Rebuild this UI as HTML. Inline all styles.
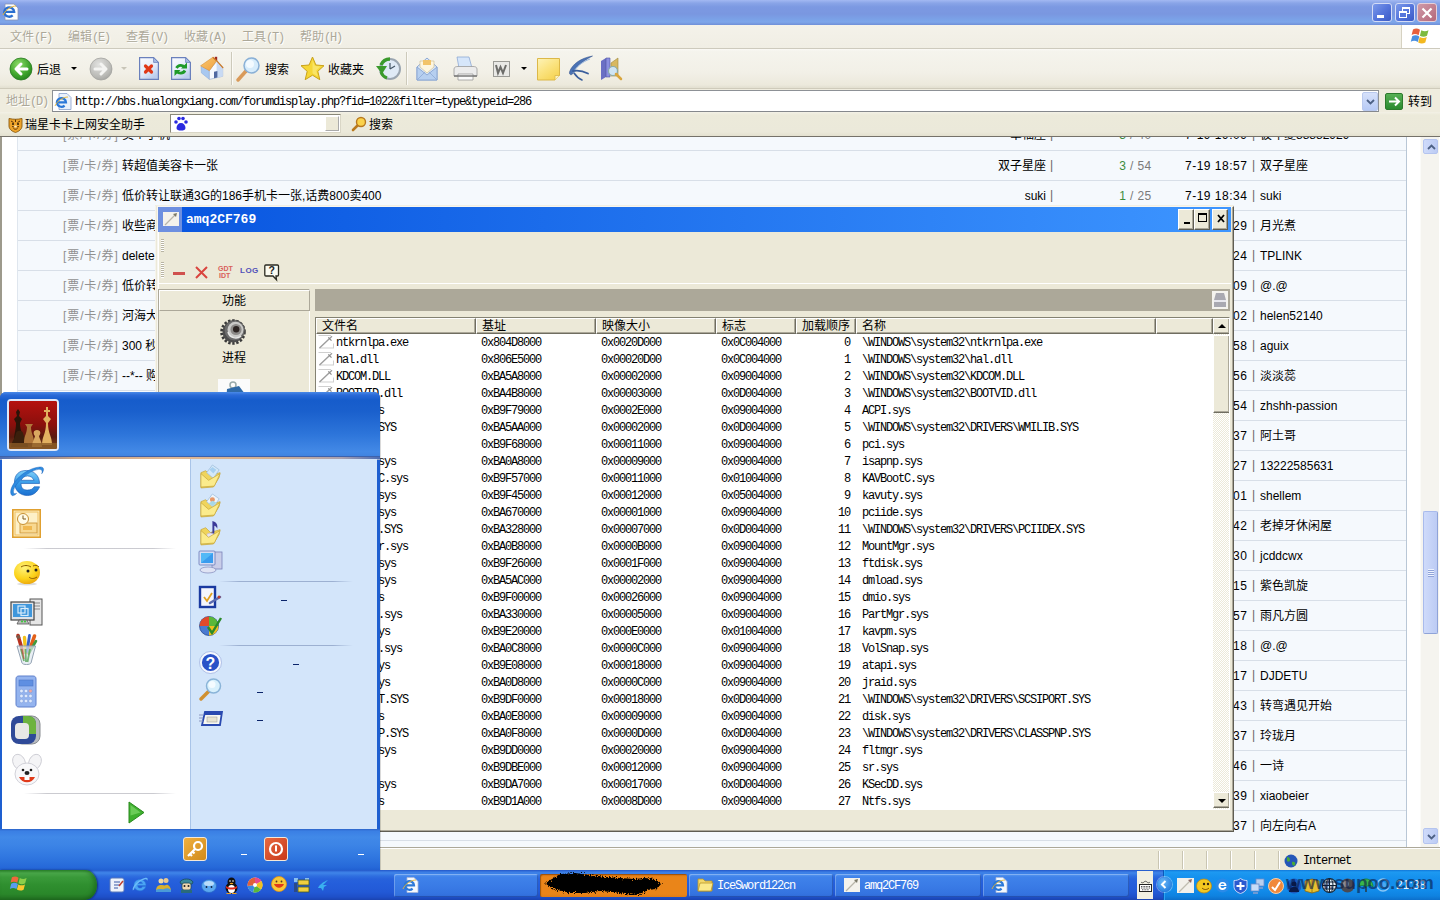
<!DOCTYPE html>
<html lang="zh"><head><meta charset="utf-8"><title>screenshot</title>
<style>
*{box-sizing:border-box;margin:0;padding:0}
html,body{width:1440px;height:900px;overflow:hidden;background:#ECE9D8}
body{position:relative;font-family:"Liberation Sans","Noto Sans CJK SC",sans-serif;font-size:12px;color:#000}
body *{position:absolute}
svg{display:block;overflow:visible}
.sim{font-family:"Liberation Mono","Noto Sans CJK SC",monospace;font-size:12px;letter-spacing:-1.2px;white-space:pre}
.ui{font-family:"Liberation Sans","Noto Sans CJK SC",sans-serif;font-size:12px;white-space:pre;line-height:14px}
/* IE chrome */
#ietitle{left:0;top:0;width:1440px;height:25px;background:linear-gradient(#a3b9f2 0,#8aa5e8 3px,#7c99e2 7px,#7a97e0 14px,#7ba3e8 20px,#7ea6ea 22px,#6f8fd8 25px)}
.capbtn{top:3px;width:20px;height:19px;border:1px solid #d4dcf6;border-radius:3px;background:linear-gradient(135deg,#7c9aea 0,#5676dc 50%,#3a5ac6 100%)}
#iemenu{left:0;top:25px;width:1440px;height:24px;background:linear-gradient(#f4f2ea,#f0eee4);border-bottom:1px solid #cdcabd}
#iemenu span{top:5px;color:#aca899;font-size:12px;line-height:14px;white-space:pre;text-shadow:1px 1px 0 #fff}
#ietool{left:0;top:49px;width:1440px;height:39px;background:linear-gradient(#fbfaf6 0,#f5f4ed 2px,#f2f0e7 60%,#ece9dc 92%,#e2dfd0);}
#ietool .lbl{top:14px;font-size:12px;line-height:14px;white-space:pre}
.tsep{top:3px;width:2px;height:33px;border-left:1px solid #cdcabb;border-right:1px solid #fbfaf6}
#ieaddr{left:0;top:88px;width:1440px;height:24px;background:#efecde;border-top:1px solid #cfcbbb;}
#ierising{left:0;top:112px;width:1440px;height:26px;background:linear-gradient(#f3f1e6 0,#eceada 3px,#ebe9da 20px,#e4e1d0 24px);border-bottom:2px solid #75726a}
/* forum */
#forum{left:0;top:137px;width:1440px;height:711px;background:#fff;overflow:hidden;border-left:2px solid #9d9a8c}
#ftable{left:15px;top:0;width:1390px;height:713px;background:linear-gradient(#d8dfe8 0,#d8dfe8 1px,transparent 1px) 0 13px/100% 30px #f5f9fd;border-left:1px solid #dfe6ee;border-right:1px solid #b9c7d6}
.frow{left:-2px;width:1440px;height:30px;font-size:12px;line-height:14px;white-space:pre}
.frow b{display:none}
.frow span{top:9px}
.frow .cat{color:#909090;letter-spacing:.9px}
.frow .bar{color:#666;top:8px}
.frow .lat{letter-spacing:.5px}
.frow .rp{color:#3c8c3c}
.frow .vw{color:#7a7a7a;letter-spacing:.4px}
#fsb{left:1418px;top:0;width:19px;height:713px;background:#f5f4ef;border-left:1px solid #fbfbf8}
#fsb .up,#fsb .dn,#fsb .thumb{left:2px;width:15px;background:linear-gradient(90deg,#cfdbfa,#bccbf4);border:1px solid #b4c4ef;border-radius:2px}
#fsb .up{top:2px;height:15px}
#fsb .dn{top:691px;height:16px}
#fsb .thumb{top:374px;height:123px;border-color:#a9bbec #8fa3d8 #8fa3d8 #a9bbec}
#fsb .thumb i{left:4px;width:6px;height:1px;background:#eef3ff;box-shadow:0 1px 0 #8fa3d8}
#iestatus{left:0;top:848px;width:1440px;height:22px;background:#ece9d8;border-top:1px solid #fff;box-shadow:0 -1px 0 #aca899}
#iestatus .cell{top:2px;width:24px;height:18px;border-left:1px solid #c9c5b2;box-shadow:inset 1px 0 0 #fff}
/* icesword: origin 157,206 ; size 1077x626 */
#ice{left:157px;top:206px;width:1077px;height:626px;background:#ece9d8;border:1px solid #f7f6f0;border-right-color:#5f5d52;border-bottom-color:#5f5d52;box-shadow:inset -1px -1px 0 #aca899,inset 1px 1px 0 #fff}
#ice>*{margin:-1px 0 0 -1px}
#icetitle{left:1px;top:1px;width:1073px;height:25px;background:linear-gradient(90deg,#0855e0 0,#0c5ae2 8%,#3d95ff 100%)}
#icetitle .ico{left:0;top:0;width:24px;height:25px;background:#6d8fe0}
#icetitle .t{left:28px;top:5px;color:#fff;font:bold 13px/16px "Liberation Mono",monospace;white-space:pre}
#icetitle .cb{top:2px;width:16px;height:21px;background:#ece9d8;border:1px solid #fff;border-right-color:#5f5d52;border-bottom-color:#5f5d52;box-shadow:inset -1px -1px 0 #aca899}
.grip{width:3px;background:repeating-linear-gradient(#b8b4a2 0,#b8b4a2 1px,#fff 1px,#fff 2px)}
.tiny{font:bold 7px/7px "Liberation Sans",sans-serif;white-space:pre}
#icel{left:1px;top:83px;width:152px;height:540px;border:1px solid #fff;border-top-color:#aca899;border-left-color:#aca899}
#icel .hd{left:0;top:0;width:151px;height:21px;border:1px solid #fff;border-right-color:#aca899;border-bottom-color:#aca899;background:#ece9d8}
#icel .hd span,#icel .lb{font-size:12px;line-height:14px;white-space:pre}
#icel .hd span{left:62px;top:3px}
#icebar{left:158px;top:83px;width:915px;height:22px;background:#aca899}
#icelist{left:158px;top:111px;width:915px;height:493px;background:#fff;border:1px solid #848272;border-right-color:#fff;border-bottom-color:#fff;overflow:hidden}
#icelist .lh{left:0;top:0;width:897px;height:16px;background:#ece9d8}
#icelist .hc{top:0;height:16px;border:1px solid #fff;border-right-color:#6f6d60;border-bottom-color:#6f6d60;box-shadow:inset -1px -1px 0 #aca899}
#icelist .hc span{left:5px;top:0px;font-size:12px;line-height:14px;white-space:pre}
#icelist .lr{left:0;width:897px;height:17px}
#icelist .lr span{top:2px;font-family:"Liberation Mono","Noto Sans CJK SC",monospace;font-size:12px;letter-spacing:-1.2px;line-height:14px;white-space:pre}
#icelist .lr .fi{left:2px;top:-1px}
#icelist .sb{left:897px;top:0;width:17px;height:491px;background:repeating-conic-gradient(#fff 0 25%,#ece9d8 0 50%) 0 0/2px 2px}
#icelist .sb .b{left:0;width:17px;height:16px;background:#ece9d8;border:1px solid #fff;border-right-color:#6f6d60;border-bottom-color:#6f6d60;box-shadow:inset -1px -1px 0 #aca899}
#icelist .sb .b i{left:4px;width:0;height:0;border:4px solid transparent}
/* start menu: origin 0,392 size 380x478 */
#sm{left:0;top:392px;width:380px;height:478px;background:#1e5fd0;border-radius:6px 6px 0 0;overflow:hidden;box-shadow:1px 0 0 rgba(0,0,0,.15)}
#smhead{left:0;top:0;width:380px;height:65px;background:linear-gradient(#4a8ae8 0,#2a6ad8 3px,#165ccb 8px,#1a60cd 30%,#2d75da 65%,#4389e6 92%,#3f82df 100%)}
#smpic{left:7px;top:7px;width:52px;height:52px;border:2px solid #dfe8f8;border-radius:4px;overflow:hidden;background:#800}
#smorange{left:0;top:64px;width:380px;height:3px;background:linear-gradient(#3d62ac 0,#3d62ac 1px,transparent 1px),linear-gradient(90deg,#4a6cb4 0,#c8a284 20%,#e0b894 45%,#d4b090 70%,#a8a0b0 90%,#4a6cb4 100%);box-shadow:0 1px 0 rgba(250,225,195,.55)}
#sml{left:2px;top:67px;width:188px;height:370px;background:#fff}
#smr{left:190px;top:67px;width:187px;height:370px;background:#d3e5fa;border-left:1px solid #a9c4e8}
#sm .sep{height:1px;background:linear-gradient(90deg,rgba(200,200,205,0),rgba(200,200,206,.95) 15%,rgba(200,200,206,.95) 85%,rgba(200,200,205,0))}
#smr .sep{background:linear-gradient(90deg,rgba(140,160,200,0),rgba(150,170,205,.9) 15%,rgba(150,170,205,.9) 85%,rgba(140,160,200,0))}
#sm .us{width:6px;height:1px;background:#0a246a}
#sm .us.w{background:#fff}
#smfoot{left:0;top:437px;width:380px;height:41px;background:linear-gradient(#2b63c8 0,#3a7fe4 2px,#4189e8 8px,#3c84e6 16px,#3077e0 28px,#2669d9 38px,#2160d2 41px)}
#smfoot .fb{top:8px;width:24px;height:24px;border:1px solid #f4e8d8;border-radius:3px}
/* taskbar */
#tb{left:0;top:870px;width:1440px;height:30px;background:linear-gradient(#2356c8 0,#3a7be4 2px,#3f84e8 3px,#2f6fe0 6px,#2762dc 9px,#245edb 14px,#2259d6 22px,#1e4fc8 27px,#1a43b0 30px)}
#startbtn{left:0;top:0;width:97px;height:30px;border-radius:0 12px 12px 0/0 15px 15px 0;background:linear-gradient(#2f8a2f 0,#4aa84a 3px,#3a9a3a 7px,#2f8f2f 15px,#2a872a 24px,#226f22 30px);box-shadow:1px 0 2px rgba(0,0,30,.5),inset -3px 0 4px rgba(0,60,0,.35)}
#tb .ql{top:7px}
.tk{top:4px;height:23px;border-radius:2px;background:linear-gradient(#5b9af0 0,#3f82ea 3px,#3a7be6 12px,#3473e0 20px,#2f6ad8 23px);box-shadow:inset 1px 1px 0 rgba(255,255,255,.25),inset -1px -1px 0 rgba(0,0,60,.25)}
.tk.on{background:linear-gradient(#d97512 0,#ea8519 3px,#ea8519 20px,#e07d16 23px);box-shadow:inset 1px 1px 1px rgba(90,40,0,.5)}
.tk span{top:5px;color:#fff;font-family:"Liberation Mono",monospace;font-size:12px;letter-spacing:-1.2px;line-height:14px;white-space:pre}
#kbd{left:1137px;top:1px;width:16px;height:28px;background:#f1efe2}
#tray{left:1163px;top:0;width:277px;height:30px;background:linear-gradient(#1277d8 0,#1d9af2 2px,#1a96f0 4px,#1590ee 8px,#128ceb 20px,#0f82e0 26px,#0c6fcb 30px);border-left:1px solid #0c58b8;box-shadow:inset 1px 0 0 #2aa4f6}
#tray .chev{left:-7px;top:7px;width:15px;height:15px;border-radius:8px;background:radial-gradient(circle at 40% 35%,#6ab8f8,#2a82e0 70%,#1a60c0);box-shadow:0 0 0 1px rgba(255,255,255,.35)}
#tray .ti{top:8px}
#tray .clock{left:232px;top:9px;color:#e8f2ff;font-size:12px;line-height:12px;white-space:pre}
#tray .wm{left:122px;top:2px;color:rgba(8,24,70,.6);font:bold 19px/22px "Liberation Sans",sans-serif;letter-spacing:-.2px;white-space:pre}
#ice::before{content:"";position:absolute;left:-3px;top:-2px;width:2px;height:627px;background:#ece9d8;box-shadow:inset 1px 0 0 #f6f4ec}
#ice::after{content:"";position:absolute;left:-3px;top:-2px;width:1079px;height:1px;background:#f1efe4}
#iemenu span i,#ieaddr span i{position:static;font-style:normal;font-family:"Liberation Mono",monospace;font-size:12px;letter-spacing:-1.2px}

</style></head>
<body>
<div id="ietitle" class="abs">
 <svg style="left:2px;top:3px" width="18" height="18" viewBox="0 0 18 18"><path d="M3 1h9l4 4v12H3z" fill="#fdfdfd" stroke="#8a96b8" stroke-width=".8"/><path d="M2.800 8.800h9.400a5 4.700 0 1 0-1.500 3.600" fill="none" stroke="#2b6fd0" stroke-width="2.300"/><path d="M1 12c3-6 9-9 13-9" stroke="#e8b530" stroke-width="1" fill="none"/></svg>
 <div class="capbtn" style="left:1372px"><div style="left:4px;top:11px;width:7px;height:3px;background:#fff"></div></div>
 <div class="capbtn" style="left:1395px"><div style="left:6px;top:3px;width:8px;height:7px;border:1px solid #fff;border-top-width:2px"></div><div style="left:3px;top:7px;width:8px;height:7px;border:1px solid #fff;border-top-width:2px;background:#5676dc"></div></div>
 <div class="capbtn" style="left:1417px;background:linear-gradient(135deg,#cf9aa8,#b5687a);border-color:#e6cfd8"><svg style="left:3px;top:3px" width="12" height="12" viewBox="0 0 12 12"><path d="M1.5 1.5l9 9M10.5 1.5l-9 9" stroke="#fff" stroke-width="2.2"/></svg></div>
</div>
<div id="iemenu" class="abs">
<span style="left:10px">文件<i>(F)</i></span><span style="left:68px">编辑<i>(E)</i></span><span style="left:126px">查看<i>(V)</i></span><span style="left:184px">收藏<i>(A)</i></span><span style="left:242px">工具<i>(T)</i></span><span style="left:300px">帮助<i>(H)</i></span>
<div style="left:1401px;top:0;width:39px;height:23px;background:#fff;border-left:1px solid #d6d2c2"></div>
<svg style="left:1411px;top:2px" width="20" height="18" viewBox="0 0 20 18"><path d="M2 2.5c2.5-1.3 4.5-1.2 7 .3L7.6 8.2c-2.400-1.400-4.500-1.500-7-.2z" fill="#e8603c"/><path d="M10.300 3.300c2.500 1.300 4.600 1.300 7.200 0l-1.500 5.500c-2.500 1.300-4.600 1.300-7.100-.1z" fill="#7cba3d"/><path d="M.3 9.200c2.500-1.300 4.600-1.200 7.100.2l-1.500 5.500c-2.400-1.400-4.500-1.500-7-.2z" fill="#4a8fe0" transform="translate(.9 0)"/><path d="M8.700 10c2.500 1.300 4.600 1.300 7.100 0l-1.500 5.500c-2.500 1.300-4.600 1.300-7.100-.1z" fill="#f3b81f"/></svg>
</div>
<div id="ietool" class="abs">
 <!-- back -->
 <svg style="left:9px;top:8px" width="24" height="24" viewBox="0 0 24 24"><defs><radialGradient id="gb" cx=".4" cy=".3" r=".8"><stop offset="0" stop-color="#8fdc6a"/><stop offset=".6" stop-color="#3fa52c"/><stop offset="1" stop-color="#1f7a1a"/></radialGradient><radialGradient id="gg" cx=".4" cy=".3" r=".8"><stop offset="0" stop-color="#e2e2e0"/><stop offset=".7" stop-color="#b9b9b5"/><stop offset="1" stop-color="#9e9e9a"/></radialGradient></defs><circle cx="12" cy="12" r="11" fill="url(#gb)" stroke="#2a7a22" stroke-width=".8"/><path d="M18 12H8M12 7l-5 5 5 5" stroke="#fff" stroke-width="3" fill="none" stroke-linejoin="round" stroke-linecap="round"/></svg>
 <span class="lbl" style="left:37px">后退</span>
 <div style="left:71px;top:18px;border:3px solid transparent;border-top:3px solid #000;border-bottom:0"></div>
 <svg style="left:89px;top:8px" width="24" height="24" viewBox="0 0 24 24"><circle cx="12" cy="12" r="11" fill="url(#gg)" stroke="#a3a39f" stroke-width=".8"/><path d="M6 12h10M12 7l5 5-5 5" stroke="#f4f4f2" stroke-width="3" fill="none" stroke-linejoin="round" stroke-linecap="round"/></svg>
 <div style="left:121px;top:18px;border:3px solid transparent;border-top:3px solid #c8c5b8;border-bottom:0"></div>
 <!-- stop -->
 <svg style="left:139px;top:8px" width="20" height="23" viewBox="0 0 20 23"><defs><linearGradient id="pg" x1="0" y1="0" x2=".6" y2="1"><stop offset="0" stop-color="#fbfcff"/><stop offset=".6" stop-color="#e4ecfa"/><stop offset="1" stop-color="#bccdee"/></linearGradient></defs><path d="M.6.600h14l4.800 4.800v17H.6z" fill="url(#pg)" stroke="#6a80bc" stroke-width="1.200"/><path d="M14.600.6v4.800h4.800z" fill="#a8bce4" stroke="#6a80bc" stroke-width=".8"/><path d="M6.500 9l6 6M12.500 9l-6 6" stroke="#e03818" stroke-width="3.200" stroke-linecap="round"/></svg>
 <!-- refresh -->
 <svg style="left:171px;top:8px" width="20" height="23" viewBox="0 0 20 23"><path d="M.6.600h14l4.800 4.800v17H.6z" fill="url(#pg)" stroke="#6a80bc" stroke-width="1.200"/><path d="M14.600.6v4.800h4.800z" fill="#a8bce4" stroke="#6a80bc" stroke-width=".8"/><path d="M14 10.500a5 5 0 0 0-8.500.500" stroke="#1f9a2a" stroke-width="2.800" fill="none"/><path d="M16 5.500v6h-6z" fill="#1f9a2a"/><path d="M5.500 14a5 5 0 0 0 8.500-.500" stroke="#1f9a2a" stroke-width="2.800" fill="none"/><path d="M3.500 19v-6h6z" fill="#1f9a2a"/></svg>
 <!-- home -->
 <svg style="left:201px;top:7px" width="23" height="25" viewBox="0 0 23 25"><defs><linearGradient id="rf" x1="0" y1="0" x2="1" y2="1"><stop offset="0" stop-color="#f8c870"/><stop offset="1" stop-color="#f0a040"/></linearGradient></defs><rect x="13.800" y=".8" width="2.400" height="4" fill="#a02820"/><path d="M0 10.400l8.400 3.800v9.200L.4 16.900z" fill="#a8c8f0" stroke="#88a8d8" stroke-width=".5"/><path d="M8.400 14.200l7.200-8.700 6.100 6.800v8L8.400 23.400z" fill="#f6f9fe" stroke="#90a8d0" stroke-width=".6"/><path d="M15.600 5.500l6.100 6.800v8l-6 1.400z" fill="#c8daf4"/><path d="M-.4 9.800L11.800 1.300l3.800 3.400-7.200 10z" fill="url(#rf)" stroke="#d89038" stroke-width=".6"/><path d="M11.800 1.300l3.800 3.400 6.600 7.300" fill="none" stroke="#c87828" stroke-width="1.200"/><path d="M13 15.800l3.400-.8v6.500l-3.400.8z" fill="#5068a0"/></svg>
 <div class="tsep" style="left:231px"></div>
 <!-- search -->
 <svg style="left:236px;top:8px" width="25" height="25" viewBox="0 0 25 25"><path d="M2 23l8-9" stroke="#d99a5a" stroke-width="3.500" stroke-linecap="round"/><circle cx="15.500" cy="8.500" r="7.500" fill="#d7ecfb" stroke="#8ab0d6" stroke-width="1.500"/><circle cx="14" cy="7" r="4" fill="#f3faff"/></svg>
 <span class="lbl" style="left:265px">搜索</span>
 <!-- star -->
 <svg style="left:300px;top:7px" width="25" height="25" viewBox="0 0 25 25"><path d="M12.500 1l3.400 8 8.100.7-6.200 5.600 2 8.400-7.300-4.500L5.200 23.700l2-8.400L1 9.700 9.100 9z" fill="#f6d736" stroke="#c9a21b" stroke-width="1"/><path d="M12.500 4l2.400 6 5.600.5-4.200 4 1.300 5.700-5.100-3z" fill="#fbea7c" opacity=".7"/></svg>
 <span class="lbl" style="left:328px">收藏夹</span>
 <!-- history -->
 <svg style="left:376px;top:8px" width="25" height="24" viewBox="0 0 25 24"><circle cx="14" cy="12" r="10" fill="#dfeaf6" stroke="#9aa5b0" stroke-width="2"/><path d="M14 12V6M14 12l5-3" stroke="#456" stroke-width="1.200"/><path d="M14 2a10 10 0 0 0-9 6" stroke="#3a9a2c" stroke-width="3.500" fill="none"/><path d="M0 9h11l-5 8z" fill="#3a9a2c"/><path d="M5 15a10 10 0 0 0 6 6" stroke="#3a9a2c" stroke-width="3" fill="none"/></svg>
 <div class="tsep" style="left:406px"></div>
 <!-- mail -->
 <svg style="left:416px;top:8px" width="22" height="24" viewBox="0 0 22 24"><path d="M1 10L11 1l10 9v13H1z" fill="#dbe8f8" stroke="#8ea9d4"/><path d="M4 10V4h14v6l-7 6z" fill="#fdf6e0" stroke="#c9b98a" stroke-width=".6"/><path d="M7 3h8v5H7z" fill="#f2c46a"/><path d="M1 10l10 8 10-8v13H1z" fill="#b6cff0" stroke="#8ea9d4"/><path d="M1 23l8-8M21 23l-8-8" stroke="#8ea9d4" stroke-width=".8"/></svg>
 <!-- printer -->
 <svg style="left:453px;top:7px" width="25" height="26" viewBox="0 0 25 26"><path d="M6 12L4 1h12l3 11z" fill="#d6e6fa" stroke="#8ea9d4" stroke-width=".8"/><path d="M1 13c0-2 2-2.500 4-2.500h15c2 0 4 .5 4 2.500v7H1z" fill="#ececec" stroke="#9a9a9a" stroke-width=".8"/><path d="M5 18h15v6H5z" fill="#fafafa" stroke="#9a9a9a" stroke-width=".8"/><path d="M1 20h23" stroke="#777" stroke-width="1.500"/></svg>
 <!-- word -->
 <svg style="left:493px;top:12px" width="17" height="16" viewBox="0 0 17 16"><rect x=".5" y=".5" width="16" height="15" fill="#e9e9e6" stroke="#9b9b96"/><path d="M3 4l2 8 2.500-6 2.500 6 3-8" stroke="#6d6d6a" stroke-width="2" fill="none"/></svg>
 <div style="left:521px;top:18px;border:3px solid transparent;border-top:3px solid #000;border-bottom:0"></div>
 <!-- note -->
 <svg style="left:537px;top:9px" width="23" height="23" viewBox="0 0 23 23"><defs><linearGradient id="nt" x1="0" y1="0" x2=".7" y2="1"><stop offset="0" stop-color="#fdf3b8"/><stop offset=".5" stop-color="#fbe482"/><stop offset="1" stop-color="#f6d455"/></linearGradient></defs><path d="M.5.500h22v17l-4.500 4.500H.5z" fill="url(#nt)" stroke="#dcb848"/><path d="M18 22v-4.500h4.500" fill="#fdf4c0" stroke="#dcb848" stroke-width=".8"/></svg>
 <!-- bird -->
 <svg style="left:567px;top:6px" width="26" height="26" viewBox="0 0 26 26"><path d="M25.500 1C14 3 5 9 2.500 17c-.5 2.500 1.500 3.500 3 2C7.500 13 14 7 25.500 1z" fill="#4a72b4" stroke="#2a4a86" stroke-width=".5"/><path d="M23 4C15 7 9 12 6 18" stroke="#9ab8e0" stroke-width="1" fill="none"/><path d="M6 16c5-1 10 0 15 2.500" stroke="#3a5e9c" stroke-width="1.800" fill="none" stroke-linecap="round"/><path d="M7 18c2 3 4.500 5.500 8 7" stroke="#3a5e9c" stroke-width="1.600" fill="none" stroke-linecap="round"/></svg>
 <!-- books -->
 <svg style="left:600px;top:8px" width="23" height="24" viewBox="0 0 23 24"><path d="M1 4l5-3v19l-5 3z" fill="#6a6fc4"/><path d="M6 1h4v19H6z" fill="#8a8fe0" stroke="#4d52a0" stroke-width=".6"/><path d="M11 6l7-5v18h-7z" fill="#d8b860" stroke="#a08a40" stroke-width=".6"/><circle cx="13" cy="14" r="4.500" fill="#cfe5f5" stroke="#8aa" stroke-width="1.200"/><path d="M16 17l5 5" stroke="#d9a63e" stroke-width="2.500" stroke-linecap="round"/></svg>
</div>
<div id="ieaddr" class="abs">
 <span style="left:6px;top:5px;color:#aca899;font-size:12px;line-height:14px;white-space:pre;text-shadow:1px 1px 0 #fff">地址<i>(D)</i></span>
 <div style="left:52px;top:1px;width:1327px;height:22px;background:#fff;border:1px solid #8d9196;border-bottom-color:#85888c"></div>
 <svg style="left:55px;top:4px" width="17" height="17" viewBox="0 0 17 17"><path d="M4 .5h8l4 4v12H4z" fill="#eaf1fb" stroke="#88a0cc" stroke-width=".8"/><path d="M2.300 9.300h8.700a4.600 4.300 0 1 0-1.400 3.300" fill="none" stroke="#2b78d8" stroke-width="2.200"/><path d="M0 13c2-5 8-9 13-9" stroke="#e8b530" stroke-width=".9" fill="none"/></svg>
 <span class="sim" style="left:75px;top:6px;line-height:14px">http://bbs.hualongxiang.com/forumdisplay.php?fid=1022&amp;filter=type&amp;typeid=286</span>
 <div style="left:1362px;top:3px;width:16px;height:19px;background:linear-gradient(#d6e1fb,#b7caf5);border:1px solid #b9c9ee;border-radius:2px"><svg style="left:3px;top:6px" width="9" height="6" viewBox="0 0 9 6"><path d="M1 1l3.500 3.500L8 1" stroke="#4d6185" stroke-width="1.800" fill="none"/></svg></div>
 <div style="left:1385px;top:4px;width:18px;height:17px;background:linear-gradient(#58b055,#2a8a2f);border:1px solid #2c7a2c;border-radius:2px"><svg style="left:2px;top:2px" width="13" height="11" viewBox="0 0 13 11"><path d="M1 5.500h10M7 1.500l4 4-4 4" stroke="#fff" stroke-width="2" fill="none"/></svg></div>
 <span class="ui" style="left:1408px;top:6px">转到</span>
</div>
<div id="ierising" class="abs">
 <svg style="left:8px;top:5px" width="15" height="16" viewBox="0 0 15 16"><path d="M1 1.500c4.300 1 8.700 1 13 0v7.500c0 3.200-3.200 5.500-6.500 6.500C4.200 14.500 1 12.200 1 9z" fill="#eda32a" stroke="#8a5a10" stroke-width=".9"/><path d="M3 4l2.500 1.500M12 4L9.500 5.500M7.500 2.500v2.500M4 9.500l2 .5M11 9.500l-2 .5" stroke="#5a3208" stroke-width="1"/><circle cx="5" cy="7" r="1" fill="#2a1a08"/><circle cx="10" cy="7" r="1" fill="#2a1a08"/><path d="M5.500 11.500c1.300 1 2.700 1 4 0" stroke="#5a3208" stroke-width="1" fill="none"/><ellipse cx="7.500" cy="9.500" rx="1.300" ry=".9" fill="#fbe9c0"/></svg>
 <span class="ui" style="left:25px;top:6px">瑞星卡卡上网安全助手</span>
 <div style="left:170px;top:2px;width:171px;height:19px;background:#fff;border:1px solid #8a8878;border-right-color:#d9d6c6;border-bottom-color:#d9d6c6"></div>
 <svg style="left:173px;top:4px" width="15" height="15" viewBox="0 0 15 15"><circle cx="3" cy="6" r="1.800" fill="#2a2ae0"/><circle cx="6" cy="2.500" r="1.800" fill="#2a2ae0"/><circle cx="10" cy="2.500" r="1.800" fill="#2a2ae0"/><circle cx="13" cy="6" r="1.800" fill="#2a2ae0"/><path d="M3.500 12c0-3 2-5 4.500-5s4.500 2 4.500 5c0 2-2 2.500-4.500 2.500S3.500 14 3.500 12z" fill="#2a2ae0"/></svg>
 <div style="left:325px;top:4px;width:14px;height:15px;background:#ece9d8;border:1px solid #fff;border-right-color:#aaa;border-bottom-color:#aaa"></div>
 <svg style="left:351px;top:4px" width="16" height="16" viewBox="0 0 16 16"><path d="M2 14l5-5" stroke="#b8791f" stroke-width="2.600" stroke-linecap="round"/><circle cx="10" cy="6" r="4.500" fill="#fbd24a" stroke="#b8791f" stroke-width="1.400"/></svg>
 <span class="ui" style="left:369px;top:6px">搜索</span>
</div>
<div id="forum" class="abs">
<div id="ftable"></div>
<div class="frow" style="top:-18px"><b></b><span class="cat" style="left:63px">[票/卡/券]</span><span style="left:122px">卖个手机</span><span class="au" style="right:394px">幸福座</span><span class="bar" style="left:1050px">|</span><span class="rp" style="right:314px">3</span><span class="vw" style="left:1130px">/ 40</span><span class="lat" style="left:1185px">7-19 19:09</span><span class="bar" style="left:1252px">|</span><span style="left:1260px">彼年夏88882929</span></div>
<div class="frow" style="top:13px"><b></b><span class="cat" style="left:63px">[票/卡/券]</span><span style="left:122px">转超值美容卡一张</span><span class="au" style="right:394px">双子星座</span><span class="bar" style="left:1050px">|</span><span class="rp" style="right:314px">3</span><span class="vw" style="left:1130px">/ 54</span><span class="lat" style="left:1185px">7-19 18:57</span><span class="bar" style="left:1252px">|</span><span style="left:1260px">双子星座</span></div>
<div class="frow" style="top:43px"><b></b><span class="cat" style="left:63px">[票/卡/券]</span><span style="left:122px">低价转让联通3G的186手机卡一张,话费800卖400</span><span class="au" style="right:394px">suki</span><span class="bar" style="left:1050px">|</span><span class="rp" style="right:314px">1</span><span class="vw" style="left:1130px">/ 25</span><span class="lat" style="left:1185px">7-19 18:34</span><span class="bar" style="left:1252px">|</span><span style="left:1260px">suki</span></div>
<div class="frow" style="top:73px"><b></b><span class="cat" style="left:63px">[票/卡/券]</span><span style="left:122px">收些商场购物卡</span><span class="au" style="right:394px">月光煮</span><span class="bar" style="left:1050px">|</span><span class="rp" style="right:314px">2</span><span class="vw" style="left:1130px">/ 61</span><span class="lat" style="left:1185px">7-19 17:29</span><span class="bar" style="left:1252px">|</span><span style="left:1260px">月光煮</span></div>
<div class="frow" style="top:103px"><b></b><span class="cat" style="left:63px">[票/卡/券]</span><span style="left:122px">delete</span><span class="au" style="right:394px">TPLINK</span><span class="bar" style="left:1050px">|</span><span class="rp" style="right:314px">0</span><span class="vw" style="left:1130px">/ 33</span><span class="lat" style="left:1185px">7-19 17:24</span><span class="bar" style="left:1252px">|</span><span style="left:1260px">TPLINK</span></div>
<div class="frow" style="top:133px"><b></b><span class="cat" style="left:63px">[票/卡/券]</span><span style="left:122px">低价转让电影票</span><span class="au" style="right:394px">@.@</span><span class="bar" style="left:1050px">|</span><span class="rp" style="right:314px">4</span><span class="vw" style="left:1130px">/ 72</span><span class="lat" style="left:1185px">7-19 17:09</span><span class="bar" style="left:1252px">|</span><span style="left:1260px">@.@</span></div>
<div class="frow" style="top:163px"><b></b><span class="cat" style="left:63px">[票/卡/券]</span><span style="left:122px">河海大学游泳票</span><span class="au" style="right:394px">helen52140</span><span class="bar" style="left:1050px">|</span><span class="rp" style="right:314px">1</span><span class="vw" style="left:1130px">/ 48</span><span class="lat" style="left:1185px">7-19 17:02</span><span class="bar" style="left:1252px">|</span><span style="left:1260px">helen52140</span></div>
<div class="frow" style="top:193px"><b></b><span class="cat" style="left:63px">[票/卡/券]</span><span style="left:122px">300 秒游泳卡转让</span><span class="au" style="right:394px">aguix</span><span class="bar" style="left:1050px">|</span><span class="rp" style="right:314px">2</span><span class="vw" style="left:1130px">/ 39</span><span class="lat" style="left:1185px">7-19 16:58</span><span class="bar" style="left:1252px">|</span><span style="left:1260px">aguix</span></div>
<div class="frow" style="top:223px"><b></b><span class="cat" style="left:63px">[票/卡/券]</span><span style="left:122px">--*-- 购物卡回收</span><span class="au" style="right:394px">淡淡蕊</span><span class="bar" style="left:1050px">|</span><span class="rp" style="right:314px">0</span><span class="vw" style="left:1130px">/ 27</span><span class="lat" style="left:1185px">7-19 16:56</span><span class="bar" style="left:1252px">|</span><span style="left:1260px">淡淡蕊</span></div>
<div class="frow" style="top:253px"><b></b><span class="cat" style="left:63px">[票/卡/券]</span><span style="left:122px">转让健身卡</span><span class="au" style="right:394px">zhshh-passion</span><span class="bar" style="left:1050px">|</span><span class="rp" style="right:314px">5</span><span class="vw" style="left:1130px">/ 88</span><span class="lat" style="left:1185px">7-19 16:54</span><span class="bar" style="left:1252px">|</span><span style="left:1260px">zhshh-passion</span></div>
<div class="frow" style="top:283px"><b></b><span class="cat" style="left:63px">[票/卡/券]</span><span style="left:122px">收购物卡</span><span class="au" style="right:394px">阿土哥</span><span class="bar" style="left:1050px">|</span><span class="rp" style="right:314px">1</span><span class="vw" style="left:1130px">/ 30</span><span class="lat" style="left:1185px">7-19 16:37</span><span class="bar" style="left:1252px">|</span><span style="left:1260px">阿土哥</span></div>
<div class="frow" style="top:313px"><b></b><span class="cat" style="left:63px">[票/卡/券]</span><span style="left:122px">出售手机充值卡</span><span class="au" style="right:394px">13222585631</span><span class="bar" style="left:1050px">|</span><span class="rp" style="right:314px">0</span><span class="vw" style="left:1130px">/ 22</span><span class="lat" style="left:1185px">7-19 16:27</span><span class="bar" style="left:1252px">|</span><span style="left:1260px">13222585631</span></div>
<div class="frow" style="top:343px"><b></b><span class="cat" style="left:63px">[票/卡/券]</span><span style="left:122px">转电影票两张</span><span class="au" style="right:394px">shellem</span><span class="bar" style="left:1050px">|</span><span class="rp" style="right:314px">3</span><span class="vw" style="left:1130px">/ 65</span><span class="lat" style="left:1185px">7-19 16:01</span><span class="bar" style="left:1252px">|</span><span style="left:1260px">shellem</span></div>
<div class="frow" style="top:373px"><b></b><span class="cat" style="left:63px">[票/卡/券]</span><span style="left:122px">休闲卡转让</span><span class="au" style="right:394px">老掉牙休闲屋</span><span class="bar" style="left:1050px">|</span><span class="rp" style="right:314px">2</span><span class="vw" style="left:1130px">/ 41</span><span class="lat" style="left:1185px">7-19 15:42</span><span class="bar" style="left:1252px">|</span><span style="left:1260px">老掉牙休闲屋</span></div>
<div class="frow" style="top:403px"><b></b><span class="cat" style="left:63px">[票/卡/券]</span><span style="left:122px">求购游泳卡</span><span class="au" style="right:394px">jcddcwx</span><span class="bar" style="left:1050px">|</span><span class="rp" style="right:314px">1</span><span class="vw" style="left:1130px">/ 36</span><span class="lat" style="left:1185px">7-19 15:30</span><span class="bar" style="left:1252px">|</span><span style="left:1260px">jcddcwx</span></div>
<div class="frow" style="top:433px"><b></b><span class="cat" style="left:63px">[票/卡/券]</span><span style="left:122px">转让美发卡</span><span class="au" style="right:394px">紫色凯旋</span><span class="bar" style="left:1050px">|</span><span class="rp" style="right:314px">0</span><span class="vw" style="left:1130px">/ 19</span><span class="lat" style="left:1185px">7-19 15:15</span><span class="bar" style="left:1252px">|</span><span style="left:1260px">紫色凯旋</span></div>
<div class="frow" style="top:463px"><b></b><span class="cat" style="left:63px">[票/卡/券]</span><span style="left:122px">面包券转让</span><span class="au" style="right:394px">雨凡方圆</span><span class="bar" style="left:1050px">|</span><span class="rp" style="right:314px">2</span><span class="vw" style="left:1130px">/ 58</span><span class="lat" style="left:1185px">7-19 14:57</span><span class="bar" style="left:1252px">|</span><span style="left:1260px">雨凡方圆</span></div>
<div class="frow" style="top:493px"><b></b><span class="cat" style="left:63px">[票/卡/券]</span><span style="left:122px">电影票求购</span><span class="au" style="right:394px">@.@</span><span class="bar" style="left:1050px">|</span><span class="rp" style="right:314px">1</span><span class="vw" style="left:1130px">/ 44</span><span class="lat" style="left:1185px">7-19 14:18</span><span class="bar" style="left:1252px">|</span><span style="left:1260px">@.@</span></div>
<div class="frow" style="top:523px"><b></b><span class="cat" style="left:63px">[票/卡/券]</span><span style="left:122px">超市卡出售</span><span class="au" style="right:394px">DJDETU</span><span class="bar" style="left:1050px">|</span><span class="rp" style="right:314px">0</span><span class="vw" style="left:1130px">/ 31</span><span class="lat" style="left:1185px">7-19 14:17</span><span class="bar" style="left:1252px">|</span><span style="left:1260px">DJDETU</span></div>
<div class="frow" style="top:553px"><b></b><span class="cat" style="left:63px">[票/卡/券]</span><span style="left:122px">蛋糕券转让</span><span class="au" style="right:394px">转弯遇见开始</span><span class="bar" style="left:1050px">|</span><span class="rp" style="right:314px">6</span><span class="vw" style="left:1130px">/ 93</span><span class="lat" style="left:1185px">7-19 13:43</span><span class="bar" style="left:1252px">|</span><span style="left:1260px">转弯遇见开始</span></div>
<div class="frow" style="top:583px"><b></b><span class="cat" style="left:63px">[票/卡/券]</span><span style="left:122px">月饼票回收</span><span class="au" style="right:394px">玲珑月</span><span class="bar" style="left:1050px">|</span><span class="rp" style="right:314px">2</span><span class="vw" style="left:1130px">/ 47</span><span class="lat" style="left:1185px">7-19 13:37</span><span class="bar" style="left:1252px">|</span><span style="left:1260px">玲珑月</span></div>
<div class="frow" style="top:613px"><b></b><span class="cat" style="left:63px">[票/卡/券]</span><span style="left:122px">健身卡转让</span><span class="au" style="right:394px">一诗</span><span class="bar" style="left:1050px">|</span><span class="rp" style="right:314px">1</span><span class="vw" style="left:1130px">/ 29</span><span class="lat" style="left:1185px">7-19 12:46</span><span class="bar" style="left:1252px">|</span><span style="left:1260px">一诗</span></div>
<div class="frow" style="top:643px"><b></b><span class="cat" style="left:63px">[票/卡/券]</span><span style="left:122px">游泳票两张</span><span class="au" style="right:394px">xiaobeier</span><span class="bar" style="left:1050px">|</span><span class="rp" style="right:314px">3</span><span class="vw" style="left:1130px">/ 52</span><span class="lat" style="left:1185px">7-19 12:39</span><span class="bar" style="left:1252px">|</span><span style="left:1260px">xiaobeier</span></div>
<div class="frow" style="top:673px"><b></b><span class="cat" style="left:63px">[票/卡/券]</span><span style="left:122px">话费卡出售</span><span class="au" style="right:394px">向左向右A</span><span class="bar" style="left:1050px">|</span><span class="rp" style="right:314px">0</span><span class="vw" style="left:1130px">/ 26</span><span class="lat" style="left:1185px">7-19 12:37</span><span class="bar" style="left:1252px">|</span><span style="left:1260px">向左向右A</span></div>
<div class="frow" style="top:703px"><b></b><span class="cat" style="left:63px">[票/卡/券]</span><span style="left:122px">购物卡</span><span class="au" style="right:394px">abc</span><span class="bar" style="left:1050px">|</span><span class="rp" style="right:314px">0</span><span class="vw" style="left:1130px">/ 26</span><span class="lat" style="left:1185px">7-19 12:30</span><span class="bar" style="left:1252px">|</span><span style="left:1260px">abc</span></div>
<div id="fsb"><div class="up"><svg width="9" height="6" viewBox="0 0 9 6" style="left:3px;top:4px"><path d="M1 5l3.500-3.500L8 5" stroke="#4d6185" stroke-width="1.800" fill="none"/></svg></div><div class="thumb"><i style="top:57px"></i><i style="top:59px"></i><i style="top:61px"></i><i style="top:63px"></i></div><div class="dn"><svg width="9" height="6" viewBox="0 0 9 6" style="left:3px;top:5px"><path d="M1 1l3.500 3.500L8 1" stroke="#4d6185" stroke-width="1.800" fill="none"/></svg></div></div>
</div>
<div id="iestatus" class="abs"><div class="cell" style="left:1158px"></div><div class="cell" style="left:1182px"></div><div class="cell" style="left:1206px"></div><div class="cell" style="left:1230px"></div><div class="cell" style="left:1254px"></div><div class="cell" style="left:1278px;width:162px"></div><svg style="left:1284px;top:5px" width="14" height="14" viewBox="0 0 14 14"><circle cx="7" cy="7" r="6.500" fill="#2456b8"/><path d="M3 3c2 0 3 1 3 3s-2 2-3 1zM8 8c2-1 4 0 3 3-1 1-2 1-3-1z" fill="#47a83a"/></svg><span class="sim" style="left:1303px;top:5px;line-height:14px">Internet</span></div>
<div id="ice" class="abs">
<div id="icetitle"><div class="ico"><svg width="16" height="14" viewBox="0 0 16 14" style="left:5px;top:5px"><rect width="16" height="14" fill="#f4f2ec"/><path d="M2 13L12 3" stroke="#b9b6aa" stroke-width="1.200"/><path d="M10 2l4-1-1 4z" fill="#7a7868"/></svg></div><span class="t">amq2CF769</span>
<div class="cb" style="left:1020px"><div style="left:5px;top:12px;width:6px;height:2px;background:#000"></div></div>
<div class="cb" style="left:1036px"><div style="left:3px;top:3px;width:9px;height:9px;border:1px solid #000;border-top-width:2px"></div></div>
<div class="cb" style="left:1054px"><svg width="8" height="7" viewBox="0 0 8 7" style="left:4px;top:5px"><path d="M1 0l6 7M7 0L1 7" stroke="#000" stroke-width="1.800"/></svg></div>
</div>
<div class="grip" style="left:4px;top:33px;height:13px"></div><div class="grip" style="left:4px;top:56px;height:16px"></div>
<div style="left:16px;top:66px;width:12px;height:3px;background:#d0514e"></div>
<svg style="left:38px;top:60px" width="13" height="13" viewBox="0 0 13 13"><path d="M1 1l11 11M12 1L1 12" stroke="#d9453f" stroke-width="2"/></svg>
<span class="tiny" style="left:61px;top:59px;color:#d9605a">GDT</span><span class="tiny" style="left:62px;top:66px;color:#d9605a">IDT</span>
<span class="tiny" style="left:83px;top:61px;color:#5050b8;font-size:8px;letter-spacing:.5px">LOG</span>
<svg style="left:107px;top:58px" width="16" height="17" viewBox="0 0 16 17"><path d="M1.800 1c-.6 0-1 .4-1 1v9c0 .6.400 1 1 1h7.200l3.500 3.800-.5-3.800h1.500c.6 0 1-.4 1-1V2c0-.6-.4-1-1-1z" fill="#fbfbf1" stroke="#2a2a20" stroke-width="1.300"/><text x="4.600" y="10.300" font-family="Liberation Sans,sans-serif" font-weight="bold" font-size="10.500" fill="#222">?</text></svg>
<div style="left:1px;top:77px;width:1073px;height:1px;background:#fff"></div>
<div id="icel"><div class="hd"><span>功能</span></div>
<svg style="left:61px;top:27px" width="28" height="28" viewBox="0 0 28 28"><circle cx="13" cy="15" r="11" fill="none" stroke="#3a3a3a" stroke-width="3.600" stroke-dasharray="2.300 1.600"/><circle cx="13" cy="15" r="10.500" fill="#4e4e4e"/><circle cx="14.500" cy="13.500" r="10.300" fill="#6c6c6c" stroke="#444" stroke-width=".6"/><circle cx="15.500" cy="12.800" r="8" fill="#c9c9c7"/><path d="M8 15a8 8 0 0 0 13 4" stroke="#e8e8e6" stroke-width="1.500" fill="none"/><circle cx="16" cy="12.500" r="5.600" fill="#8c8a88"/><circle cx="16.200" cy="12.300" r="3.200" fill="#2c2422"/></svg>
<span class="lb" style="left:63px;top:61px">进程</span>
<div style="left:59px;top:89px;width:32px;height:32px;background:#fbfbfb"></div><svg style="left:65px;top:91px" width="22" height="24" viewBox="0 0 22 24"><circle cx="9" cy="4" r="3" fill="none" stroke="#9aa" stroke-width="1.500"/><path d="M3 8l12-3 6 8-3 10H2z" fill="#2f6aa8"/></svg>
<span class="lb" style="left:64px;top:124px">端口</span>
</div>
<div id="icebar"><div style="left:897px;top:2px;width:16px;height:18px;background:#f4f3ee"><svg width="12" height="14" viewBox="0 0 12 14" style="left:2px;top:2px"><path d="M2 0h8l2 7v7H0V7z" fill="#a9a9b1"/><rect y="7" width="12" height="2" fill="#e8e8ee"/></svg></div></div>
<div id="icelist">
<div class="lh">
<div class="hc" style="left:0px;width:160px"><span>文件名</span></div>
<div class="hc" style="left:160px;width:120px"><span>基址</span></div>
<div class="hc" style="left:280px;width:120px"><span>映像大小</span></div>
<div class="hc" style="left:400px;width:80px"><span>标志</span></div>
<div class="hc" style="left:480px;width:60px"><span>加载顺序</span></div>
<div class="hc" style="left:540px;width:300px"><span>名称</span></div>
<div class="hc" style="left:840px;width:57px"><span></span></div>
</div>
<div class="lr" style="top:16px"><svg class="fi" width="16" height="16" viewBox="0 0 16 16"><path d="M.5 2.500h12.500M1 15h15M15.500 10.500V15" fill="none" stroke="#cfcfcf" stroke-width="1"/><path d="M1.500 15L14 3.200" stroke="#9c9c9c" stroke-width="1.300"/><path d="M10.300 4.300l3.200 3.400" stroke="#8c8c8c" stroke-width="1.200"/></svg><span style="left:20px">ntkrnlpa.exe</span><span style="left:165px">0x804D8000</span><span style="left:285px">0x0020D000</span><span style="left:405px">0x0C004000</span><span style="right:363px">0</span><span style="left:546px">\WINDOWS\system32\ntkrnlpa.exe</span></div>
<div class="lr" style="top:33px"><svg class="fi" width="16" height="16" viewBox="0 0 16 16"><path d="M.5 2.500h12.500M1 15h15M15.500 10.500V15" fill="none" stroke="#cfcfcf" stroke-width="1"/><path d="M1.500 15L14 3.200" stroke="#9c9c9c" stroke-width="1.300"/><path d="M10.300 4.300l3.200 3.400" stroke="#8c8c8c" stroke-width="1.200"/></svg><span style="left:20px">hal.dll</span><span style="left:165px">0x806E5000</span><span style="left:285px">0x00020D00</span><span style="left:405px">0x0C004000</span><span style="right:363px">1</span><span style="left:546px">\WINDOWS\system32\hal.dll</span></div>
<div class="lr" style="top:50px"><svg class="fi" width="16" height="16" viewBox="0 0 16 16"><path d="M.5 2.500h12.500M1 15h15M15.500 10.500V15" fill="none" stroke="#cfcfcf" stroke-width="1"/><path d="M1.500 15L14 3.200" stroke="#9c9c9c" stroke-width="1.300"/><path d="M10.300 4.300l3.200 3.400" stroke="#8c8c8c" stroke-width="1.200"/></svg><span style="left:20px">KDCOM.DLL</span><span style="left:165px">0xBA5A8000</span><span style="left:285px">0x00002000</span><span style="left:405px">0x09004000</span><span style="right:363px">2</span><span style="left:546px">\WINDOWS\system32\KDCOM.DLL</span></div>
<div class="lr" style="top:67px"><svg class="fi" width="16" height="16" viewBox="0 0 16 16"><path d="M.5 2.500h12.500M1 15h15M15.500 10.500V15" fill="none" stroke="#cfcfcf" stroke-width="1"/><path d="M1.500 15L14 3.200" stroke="#9c9c9c" stroke-width="1.300"/><path d="M10.300 4.300l3.200 3.400" stroke="#8c8c8c" stroke-width="1.200"/></svg><span style="left:20px">BOOTVID.dll</span><span style="left:165px">0xBA4B8000</span><span style="left:285px">0x00003000</span><span style="left:405px">0x0D004000</span><span style="right:363px">3</span><span style="left:546px">\WINDOWS\system32\BOOTVID.dll</span></div>
<div class="lr" style="top:84px"><svg class="fi" width="16" height="16" viewBox="0 0 16 16"><path d="M.5 2.500h12.500M1 15h15M15.500 10.500V15" fill="none" stroke="#cfcfcf" stroke-width="1"/><path d="M1.500 15L14 3.200" stroke="#9c9c9c" stroke-width="1.300"/><path d="M10.300 4.300l3.200 3.400" stroke="#8c8c8c" stroke-width="1.200"/></svg><span style="left:20px">ACPI.sys</span><span style="left:165px">0xB9F79000</span><span style="left:285px">0x0002E000</span><span style="left:405px">0x09004000</span><span style="right:363px">4</span><span style="left:546px">ACPI.sys</span></div>
<div class="lr" style="top:101px"><svg class="fi" width="16" height="16" viewBox="0 0 16 16"><path d="M.5 2.500h12.500M1 15h15M15.500 10.500V15" fill="none" stroke="#cfcfcf" stroke-width="1"/><path d="M1.500 15L14 3.200" stroke="#9c9c9c" stroke-width="1.300"/><path d="M10.300 4.300l3.200 3.400" stroke="#8c8c8c" stroke-width="1.200"/></svg><span style="left:20px">WMILIB.SYS</span><span style="left:165px">0xBA5AA000</span><span style="left:285px">0x00002000</span><span style="left:405px">0x0D004000</span><span style="right:363px">5</span><span style="left:546px">\WINDOWS\system32\DRIVERS\WMILIB.SYS</span></div>
<div class="lr" style="top:118px"><svg class="fi" width="16" height="16" viewBox="0 0 16 16"><path d="M.5 2.500h12.500M1 15h15M15.500 10.500V15" fill="none" stroke="#cfcfcf" stroke-width="1"/><path d="M1.500 15L14 3.200" stroke="#9c9c9c" stroke-width="1.300"/><path d="M10.300 4.300l3.200 3.400" stroke="#8c8c8c" stroke-width="1.200"/></svg><span style="left:20px">pci.sys</span><span style="left:165px">0xB9F68000</span><span style="left:285px">0x00011000</span><span style="left:405px">0x09004000</span><span style="right:363px">6</span><span style="left:546px">pci.sys</span></div>
<div class="lr" style="top:135px"><svg class="fi" width="16" height="16" viewBox="0 0 16 16"><path d="M.5 2.500h12.500M1 15h15M15.500 10.500V15" fill="none" stroke="#cfcfcf" stroke-width="1"/><path d="M1.500 15L14 3.200" stroke="#9c9c9c" stroke-width="1.300"/><path d="M10.300 4.300l3.200 3.400" stroke="#8c8c8c" stroke-width="1.200"/></svg><span style="left:20px">isapnp.sys</span><span style="left:165px">0xBA0A8000</span><span style="left:285px">0x00009000</span><span style="left:405px">0x09004000</span><span style="right:363px">7</span><span style="left:546px">isapnp.sys</span></div>
<div class="lr" style="top:152px"><svg class="fi" width="16" height="16" viewBox="0 0 16 16"><path d="M.5 2.500h12.500M1 15h15M15.500 10.500V15" fill="none" stroke="#cfcfcf" stroke-width="1"/><path d="M1.500 15L14 3.200" stroke="#9c9c9c" stroke-width="1.300"/><path d="M10.300 4.300l3.200 3.400" stroke="#8c8c8c" stroke-width="1.200"/></svg><span style="left:20px">KAVBootC.sys</span><span style="left:165px">0xB9F57000</span><span style="left:285px">0x00011000</span><span style="left:405px">0x01004000</span><span style="right:363px">8</span><span style="left:546px">KAVBootC.sys</span></div>
<div class="lr" style="top:169px"><svg class="fi" width="16" height="16" viewBox="0 0 16 16"><path d="M.5 2.500h12.500M1 15h15M15.500 10.500V15" fill="none" stroke="#cfcfcf" stroke-width="1"/><path d="M1.500 15L14 3.200" stroke="#9c9c9c" stroke-width="1.300"/><path d="M10.300 4.300l3.200 3.400" stroke="#8c8c8c" stroke-width="1.200"/></svg><span style="left:20px">kavuty.sys</span><span style="left:165px">0xB9F45000</span><span style="left:285px">0x00012000</span><span style="left:405px">0x05004000</span><span style="right:363px">9</span><span style="left:546px">kavuty.sys</span></div>
<div class="lr" style="top:186px"><svg class="fi" width="16" height="16" viewBox="0 0 16 16"><path d="M.5 2.500h12.500M1 15h15M15.500 10.500V15" fill="none" stroke="#cfcfcf" stroke-width="1"/><path d="M1.500 15L14 3.200" stroke="#9c9c9c" stroke-width="1.300"/><path d="M10.300 4.300l3.200 3.400" stroke="#8c8c8c" stroke-width="1.200"/></svg><span style="left:20px">pciide.sys</span><span style="left:165px">0xBA670000</span><span style="left:285px">0x00001000</span><span style="left:405px">0x09004000</span><span style="right:363px">10</span><span style="left:546px">pciide.sys</span></div>
<div class="lr" style="top:203px"><svg class="fi" width="16" height="16" viewBox="0 0 16 16"><path d="M.5 2.500h12.500M1 15h15M15.500 10.500V15" fill="none" stroke="#cfcfcf" stroke-width="1"/><path d="M1.500 15L14 3.200" stroke="#9c9c9c" stroke-width="1.300"/><path d="M10.300 4.300l3.200 3.400" stroke="#8c8c8c" stroke-width="1.200"/></svg><span style="left:20px">PCIIDEX.SYS</span><span style="left:165px">0xBA328000</span><span style="left:285px">0x00007000</span><span style="left:405px">0x0D004000</span><span style="right:363px">11</span><span style="left:546px">\WINDOWS\system32\DRIVERS\PCIIDEX.SYS</span></div>
<div class="lr" style="top:220px"><svg class="fi" width="16" height="16" viewBox="0 0 16 16"><path d="M.5 2.500h12.500M1 15h15M15.500 10.500V15" fill="none" stroke="#cfcfcf" stroke-width="1"/><path d="M1.500 15L14 3.200" stroke="#9c9c9c" stroke-width="1.300"/><path d="M10.300 4.300l3.200 3.400" stroke="#8c8c8c" stroke-width="1.200"/></svg><span style="left:20px">MountMgr.sys</span><span style="left:165px">0xBA0B8000</span><span style="left:285px">0x0000B000</span><span style="left:405px">0x09004000</span><span style="right:363px">12</span><span style="left:546px">MountMgr.sys</span></div>
<div class="lr" style="top:237px"><svg class="fi" width="16" height="16" viewBox="0 0 16 16"><path d="M.5 2.500h12.500M1 15h15M15.500 10.500V15" fill="none" stroke="#cfcfcf" stroke-width="1"/><path d="M1.500 15L14 3.200" stroke="#9c9c9c" stroke-width="1.300"/><path d="M10.300 4.300l3.200 3.400" stroke="#8c8c8c" stroke-width="1.200"/></svg><span style="left:20px">ftdisk.sys</span><span style="left:165px">0xB9F26000</span><span style="left:285px">0x0001F000</span><span style="left:405px">0x09004000</span><span style="right:363px">13</span><span style="left:546px">ftdisk.sys</span></div>
<div class="lr" style="top:254px"><svg class="fi" width="16" height="16" viewBox="0 0 16 16"><path d="M.5 2.500h12.500M1 15h15M15.500 10.500V15" fill="none" stroke="#cfcfcf" stroke-width="1"/><path d="M1.500 15L14 3.200" stroke="#9c9c9c" stroke-width="1.300"/><path d="M10.300 4.300l3.200 3.400" stroke="#8c8c8c" stroke-width="1.200"/></svg><span style="left:20px">dmload.sys</span><span style="left:165px">0xBA5AC000</span><span style="left:285px">0x00002000</span><span style="left:405px">0x09004000</span><span style="right:363px">14</span><span style="left:546px">dmload.sys</span></div>
<div class="lr" style="top:271px"><svg class="fi" width="16" height="16" viewBox="0 0 16 16"><path d="M.5 2.500h12.500M1 15h15M15.500 10.500V15" fill="none" stroke="#cfcfcf" stroke-width="1"/><path d="M1.500 15L14 3.200" stroke="#9c9c9c" stroke-width="1.300"/><path d="M10.300 4.300l3.200 3.400" stroke="#8c8c8c" stroke-width="1.200"/></svg><span style="left:20px">dmio.sys</span><span style="left:165px">0xB9F00000</span><span style="left:285px">0x00026000</span><span style="left:405px">0x09004000</span><span style="right:363px">15</span><span style="left:546px">dmio.sys</span></div>
<div class="lr" style="top:288px"><svg class="fi" width="16" height="16" viewBox="0 0 16 16"><path d="M.5 2.500h12.500M1 15h15M15.500 10.500V15" fill="none" stroke="#cfcfcf" stroke-width="1"/><path d="M1.500 15L14 3.200" stroke="#9c9c9c" stroke-width="1.300"/><path d="M10.300 4.300l3.200 3.400" stroke="#8c8c8c" stroke-width="1.200"/></svg><span style="left:20px">PartMgr.sys</span><span style="left:165px">0xBA330000</span><span style="left:285px">0x00005000</span><span style="left:405px">0x09004000</span><span style="right:363px">16</span><span style="left:546px">PartMgr.sys</span></div>
<div class="lr" style="top:305px"><svg class="fi" width="16" height="16" viewBox="0 0 16 16"><path d="M.5 2.500h12.500M1 15h15M15.500 10.500V15" fill="none" stroke="#cfcfcf" stroke-width="1"/><path d="M1.500 15L14 3.200" stroke="#9c9c9c" stroke-width="1.300"/><path d="M10.300 4.300l3.200 3.400" stroke="#8c8c8c" stroke-width="1.200"/></svg><span style="left:20px">kavpm.sys</span><span style="left:165px">0xB9E20000</span><span style="left:285px">0x000E0000</span><span style="left:405px">0x01004000</span><span style="right:363px">17</span><span style="left:546px">kavpm.sys</span></div>
<div class="lr" style="top:322px"><svg class="fi" width="16" height="16" viewBox="0 0 16 16"><path d="M.5 2.500h12.500M1 15h15M15.500 10.500V15" fill="none" stroke="#cfcfcf" stroke-width="1"/><path d="M1.500 15L14 3.200" stroke="#9c9c9c" stroke-width="1.300"/><path d="M10.300 4.300l3.200 3.400" stroke="#8c8c8c" stroke-width="1.200"/></svg><span style="left:20px">VolSnap.sys</span><span style="left:165px">0xBA0C8000</span><span style="left:285px">0x0000C000</span><span style="left:405px">0x09004000</span><span style="right:363px">18</span><span style="left:546px">VolSnap.sys</span></div>
<div class="lr" style="top:339px"><svg class="fi" width="16" height="16" viewBox="0 0 16 16"><path d="M.5 2.500h12.500M1 15h15M15.500 10.500V15" fill="none" stroke="#cfcfcf" stroke-width="1"/><path d="M1.500 15L14 3.200" stroke="#9c9c9c" stroke-width="1.300"/><path d="M10.300 4.300l3.200 3.400" stroke="#8c8c8c" stroke-width="1.200"/></svg><span style="left:20px">atapi.sys</span><span style="left:165px">0xB9E08000</span><span style="left:285px">0x00018000</span><span style="left:405px">0x09004000</span><span style="right:363px">19</span><span style="left:546px">atapi.sys</span></div>
<div class="lr" style="top:356px"><svg class="fi" width="16" height="16" viewBox="0 0 16 16"><path d="M.5 2.500h12.500M1 15h15M15.500 10.500V15" fill="none" stroke="#cfcfcf" stroke-width="1"/><path d="M1.500 15L14 3.200" stroke="#9c9c9c" stroke-width="1.300"/><path d="M10.300 4.300l3.200 3.400" stroke="#8c8c8c" stroke-width="1.200"/></svg><span style="left:20px">jraid.sys</span><span style="left:165px">0xBA0D8000</span><span style="left:285px">0x0000C000</span><span style="left:405px">0x09004000</span><span style="right:363px">20</span><span style="left:546px">jraid.sys</span></div>
<div class="lr" style="top:373px"><svg class="fi" width="16" height="16" viewBox="0 0 16 16"><path d="M.5 2.500h12.500M1 15h15M15.500 10.500V15" fill="none" stroke="#cfcfcf" stroke-width="1"/><path d="M1.500 15L14 3.200" stroke="#9c9c9c" stroke-width="1.300"/><path d="M10.300 4.300l3.200 3.400" stroke="#8c8c8c" stroke-width="1.200"/></svg><span style="left:20px">SCSIPORT.SYS</span><span style="left:165px">0xB9DF0000</span><span style="left:285px">0x00018000</span><span style="left:405px">0x0D004000</span><span style="right:363px">21</span><span style="left:546px">\WINDOWS\system32\DRIVERS\SCSIPORT.SYS</span></div>
<div class="lr" style="top:390px"><svg class="fi" width="16" height="16" viewBox="0 0 16 16"><path d="M.5 2.500h12.500M1 15h15M15.500 10.500V15" fill="none" stroke="#cfcfcf" stroke-width="1"/><path d="M1.500 15L14 3.200" stroke="#9c9c9c" stroke-width="1.300"/><path d="M10.300 4.300l3.200 3.400" stroke="#8c8c8c" stroke-width="1.200"/></svg><span style="left:20px">disk.sys</span><span style="left:165px">0xBA0E8000</span><span style="left:285px">0x00009000</span><span style="left:405px">0x09004000</span><span style="right:363px">22</span><span style="left:546px">disk.sys</span></div>
<div class="lr" style="top:407px"><svg class="fi" width="16" height="16" viewBox="0 0 16 16"><path d="M.5 2.500h12.500M1 15h15M15.500 10.500V15" fill="none" stroke="#cfcfcf" stroke-width="1"/><path d="M1.500 15L14 3.200" stroke="#9c9c9c" stroke-width="1.300"/><path d="M10.300 4.300l3.200 3.400" stroke="#8c8c8c" stroke-width="1.200"/></svg><span style="left:20px">CLASSPNP.SYS</span><span style="left:165px">0xBA0F8000</span><span style="left:285px">0x0000D000</span><span style="left:405px">0x0D004000</span><span style="right:363px">23</span><span style="left:546px">\WINDOWS\system32\DRIVERS\CLASSPNP.SYS</span></div>
<div class="lr" style="top:424px"><svg class="fi" width="16" height="16" viewBox="0 0 16 16"><path d="M.5 2.500h12.500M1 15h15M15.500 10.500V15" fill="none" stroke="#cfcfcf" stroke-width="1"/><path d="M1.500 15L14 3.200" stroke="#9c9c9c" stroke-width="1.300"/><path d="M10.300 4.300l3.200 3.400" stroke="#8c8c8c" stroke-width="1.200"/></svg><span style="left:20px">fltmgr.sys</span><span style="left:165px">0xB9DD0000</span><span style="left:285px">0x00020000</span><span style="left:405px">0x09004000</span><span style="right:363px">24</span><span style="left:546px">fltmgr.sys</span></div>
<div class="lr" style="top:441px"><svg class="fi" width="16" height="16" viewBox="0 0 16 16"><path d="M.5 2.500h12.500M1 15h15M15.500 10.500V15" fill="none" stroke="#cfcfcf" stroke-width="1"/><path d="M1.500 15L14 3.200" stroke="#9c9c9c" stroke-width="1.300"/><path d="M10.300 4.300l3.200 3.400" stroke="#8c8c8c" stroke-width="1.200"/></svg><span style="left:20px">sr.sys</span><span style="left:165px">0xB9DBE000</span><span style="left:285px">0x00012000</span><span style="left:405px">0x09004000</span><span style="right:363px">25</span><span style="left:546px">sr.sys</span></div>
<div class="lr" style="top:458px"><svg class="fi" width="16" height="16" viewBox="0 0 16 16"><path d="M.5 2.500h12.500M1 15h15M15.500 10.500V15" fill="none" stroke="#cfcfcf" stroke-width="1"/><path d="M1.500 15L14 3.200" stroke="#9c9c9c" stroke-width="1.300"/><path d="M10.300 4.300l3.200 3.400" stroke="#8c8c8c" stroke-width="1.200"/></svg><span style="left:20px">KSecDD.sys</span><span style="left:165px">0xB9DA7000</span><span style="left:285px">0x00017000</span><span style="left:405px">0x0D004000</span><span style="right:363px">26</span><span style="left:546px">KSecDD.sys</span></div>
<div class="lr" style="top:475px"><svg class="fi" width="16" height="16" viewBox="0 0 16 16"><path d="M.5 2.500h12.500M1 15h15M15.500 10.500V15" fill="none" stroke="#cfcfcf" stroke-width="1"/><path d="M1.500 15L14 3.200" stroke="#9c9c9c" stroke-width="1.300"/><path d="M10.300 4.300l3.200 3.400" stroke="#8c8c8c" stroke-width="1.200"/></svg><span style="left:20px">Ntfs.sys</span><span style="left:165px">0xB9D1A000</span><span style="left:285px">0x0008D000</span><span style="left:405px">0x09004000</span><span style="right:363px">27</span><span style="left:546px">Ntfs.sys</span></div>
<div class="sb"><div class="b" style="top:0"><i style="border-bottom:4px solid #000;border-top:0;top:5px"></i></div><div class="b" style="top:17px;height:78px"></div><div class="b" style="top:474px"><i style="border-top:4px solid #000;border-bottom:0;top:6px"></i></div></div>
</div>
</div>
<div id="sm" class="abs">
 <div id="smhead"></div>
 <div id="smpic"><svg width="48" height="48" viewBox="0 0 48 48"><defs><linearGradient id="chbg" x1="0" y1="0" x2="0" y2="1"><stop offset="0" stop-color="#b5120f"/><stop offset=".5" stop-color="#8a0f0c"/><stop offset=".75" stop-color="#5a1a0e"/><stop offset="1" stop-color="#7a4a20"/></linearGradient></defs><rect width="48" height="48" fill="url(#chbg)"/><path d="M5 40c0-8 2-10 2-18l-2-4 3-3-1-4 2-3 2 3-1 4 3 3-2 4c0 8 3 10 3 18z" fill="#2a1408"/><path d="M2 46c1-7 4-8 5-14 1-3 6-3 7 0 1 6 5 7 5 14z" fill="#3a1f0c"/><path d="M15 42c0-8 3-9 3-16l-2-3h8l-2 3c0 7 3 8 3 16z" fill="#b0763a"/><path d="M23 46c0-5 2-7 3-11-2-2-2-6 2-6s4 4 2 6c1 4 3 6 3 11z" fill="#d9a860"/><path d="M33 44c0-9 4-11 4-22l-3-4 3-3V11h-2V9h2V6h2v3h2v2h-2v4l3 3-3 4c0 11 4 13 4 22z" fill="#e2b060"/><rect y="42" width="48" height="6" fill="#8a5a26" opacity=".8"/></svg></div>
 <div id="smorange"></div>
 <div id="sml">
  <!-- IE -->
  <svg style="left:7px;top:6px" width="36" height="36" viewBox="0 0 33 33"><defs><linearGradient id="ieb" x1="0" y1="0" x2="0" y2="1"><stop offset="0" stop-color="#7fd0fa"/><stop offset=".5" stop-color="#3a9ce8"/><stop offset="1" stop-color="#1a6fd0"/></linearGradient></defs><path d="M16 5c7 0 12 5 12 12H11c0 4 2 6 6 6 3 0 5-1 6-3h5c-2 5-6 8-11 8-7 0-12-5-12-12S9 5 16 5zm1 5c-3 0-5 2-6 4h12c-1-2-3-4-6-4z" fill="url(#ieb)" stroke="#1a5db5" stroke-width=".6"/><path d="M2 27C-1 20 12 4 27 2c5-1 6 2 3 6 1-3 0-4-3-4C18 5 5 17 4 24c0 2 1 3 3 2-2 2-4 3-5 1z" fill="#2d8be0" stroke="#1a5db5" stroke-width=".4"/></svg>
  <!-- Outlook -->
  <svg style="left:10px;top:50px" width="29" height="29" viewBox="0 0 29 29"><rect x=".8" y=".8" width="27.400" height="27.400" fill="#fdf0c8" stroke="#e0a030" stroke-width="1.600"/><rect x="3" y="3" width="23" height="23" fill="none" stroke="#f0c060" stroke-width="1"/><rect x="8" y="14" width="17" height="10" fill="#f8d890" stroke="#c89030" stroke-width=".8"/><rect x="11" y="17" width="9" height="4" fill="#f0b850"/><circle cx="11" cy="10" r="5.500" fill="#fffbe8" stroke="#c89030" stroke-width="1"/><path d="M11 6.500V10h3" stroke="#7a5a20" stroke-width="1" fill="none"/></svg>
  <div class="sep" style="left:22px;top:89px;width:152px"></div>
  <!-- smiley -->
  <svg style="left:11px;top:101px" width="28" height="26" viewBox="0 0 28 26"><defs><radialGradient id="smy" cx=".4" cy=".3" r=".8"><stop offset="0" stop-color="#fff27a"/><stop offset=".6" stop-color="#fbd21a"/><stop offset="1" stop-color="#e79a0a"/></radialGradient></defs><ellipse cx="14" cy="24" rx="10" ry="1.500" fill="#ddd"/><ellipse cx="14" cy="12.500" rx="13" ry="11.500" fill="url(#smy)"/><circle cx="15" cy="11" r="1.500" fill="#222"/><circle cx="23" cy="10" r="1.500" fill="#222"/><path d="M8 7c3-2 7-2 10 0M20 6c2-1 4-1 6 1" stroke="#8a5a00" stroke-width="1" fill="none"/><path d="M16 17c2 2 5 2 8 0" stroke="#8a5a00" stroke-width="1" fill="none"/></svg>
  <!-- vmware -->
  <svg style="left:8px;top:139px" width="33" height="29" viewBox="0 0 33 29"><rect x="20" y="1" width="12" height="26" fill="#e6e6e6" stroke="#555" stroke-width="1"/><path d="M22 5h8M22 8h8M22 11h8" stroke="#888" stroke-width="1"/><rect x="1" y="4" width="23" height="18" fill="#dfe3e8" stroke="#444" stroke-width="1.200"/><rect x="3" y="6" width="19" height="13" fill="#3f97dc"/><rect x="8" y="8" width="7" height="7" fill="none" stroke="#d8ecfb" stroke-width="1.200"/><rect x="11" y="10.500" width="7" height="7" fill="none" stroke="#d8ecfb" stroke-width="1.200"/><path d="M7 26h12l-2-4h-8z" fill="#bbb" stroke="#555" stroke-width=".8"/><circle cx="12" cy="23.500" r="1" fill="#3c3"/><circle cx="15" cy="23.500" r="1" fill="#3c3"/></svg>
  <!-- pencils -->
  <svg style="left:12px;top:175px" width="24" height="32" viewBox="0 0 24 32"><path d="M4 1.500l5 17" stroke="#b8321f" stroke-width="3.600" stroke-linecap="round"/><path d="M3.500 1.500l1.500 3" stroke="#7a5a4a" stroke-width="3.400"/><path d="M10.500 3.500l1 15" stroke="#f2c21a" stroke-width="3.400" stroke-linecap="round"/><path d="M20.500 2l-6 17" stroke="#e2601a" stroke-width="3.600" stroke-linecap="round"/><path d="M15.500 1.500l-2.500 16" stroke="#3560c8" stroke-width="2.800" stroke-linecap="round"/><path d="M22 7l-7 12" stroke="#3f9a3f" stroke-width="2.600" stroke-linecap="round"/><path d="M3 12h18.500l-4.500 17c-.8 2-8.200 2-9 0z" fill="#dfe8f0" fill-opacity=".7" stroke="#93a2b3" stroke-width="1"/><path d="M7 15l3 12M11.500 15l.5 13M16 15l-2.500 13" stroke="#4f9f4f" stroke-width="1.800" opacity=".75"/><path d="M8 15l2 10" stroke="#c84030" stroke-width="1.500" opacity=".6"/></svg>
  <!-- calculator -->
  <svg style="left:12px;top:216px" width="24" height="32" viewBox="0 0 24 32"><path d="M2 4c0-2 1-3 3-3h14c2 0 3 1 3 3v25c0 2-1 3-3 3H5c-2 0-3-1-3-3z" fill="#94b4ef" stroke="#5f80cc" stroke-width="1"/><rect x="5" y="5" width="14" height="6" fill="#5f8fe2" stroke="#4f78c8" stroke-width=".6"/><g fill="#dfeafc" stroke="#7c9ad8" stroke-width=".5"><circle cx="7.500" cy="16" r="1.800"/><circle cx="12" cy="16" r="1.800"/><circle cx="16.500" cy="16" r="1.800" fill="#f0a8a0"/><circle cx="7.500" cy="21" r="1.800"/><circle cx="12" cy="21" r="1.800"/><circle cx="16.500" cy="21" r="1.800"/><circle cx="7.500" cy="26" r="1.800"/><circle cx="12" cy="26" r="1.800"/><circle cx="16.500" cy="26" r="1.800"/></g></svg>
  <!-- nero-ish -->
  <svg style="left:8px;top:255px" width="31" height="32" viewBox="0 0 31 32"><rect x="4" y="2" width="26" height="28" rx="8" fill="#b9bcc0" stroke="#8a8d92" stroke-width="1"/><rect x="1" y="2" width="25" height="28" rx="8" fill="#2f4a98"/><path d="M13 2h5c5 0 8 3 8 8v10H13z" fill="#6db33f"/><rect x="5" y="9" width="14" height="16" rx="4" fill="#e8e8e6"/></svg>
  <!-- rabbit -->
  <svg style="left:10px;top:294px" width="30" height="33" viewBox="0 0 30 33"><ellipse cx="7" cy="9" rx="6" ry="8" fill="#f4f4f6" stroke="#c8c8d0" stroke-width=".8" transform="rotate(-25 7 9)"/><ellipse cx="23" cy="9" rx="6" ry="8" fill="#f4f4f6" stroke="#c8c8d0" stroke-width=".8" transform="rotate(25 23 9)"/><ellipse cx="15" cy="21" rx="12" ry="11" fill="#f8f8fa" stroke="#c8c8d0" stroke-width=".8"/><circle cx="11" cy="17" r="1.300" fill="#222"/><circle cx="19" cy="17" r="1.300" fill="#222"/><ellipse cx="15" cy="20" rx="2.500" ry="2" fill="#222"/><path d="M7 24c3 7 13 7 16 0z" fill="#e03a1a"/><rect x="12.500" y="24" width="5" height="3" fill="#fff"/></svg>
  <div class="sep" style="left:22px;top:334px;width:152px"></div>
  <svg style="left:126px;top:342px" width="17" height="23" viewBox="0 0 17 23"><path d="M1 1l15 10.500L1 22z" fill="#3fb02f" stroke="#2a8a1f" stroke-width="1"/><path d="M2.500 4l10 7.500-10 3z" fill="#7fd86a" opacity=".7"/></svg>
 </div>
 <div id="smr">
  <!-- folders -->
  <svg style="left:8px;top:5px" width="23" height="24" viewBox="0 0 24 25"><path d="M2 9l5-2 5 5 10-3-1 5-6 10-13 1z" fill="#efd45c" stroke="#c4a436" stroke-width=".7"/><path d="M8 9l6-8 7 5-6 9z" fill="#d4e8f8" stroke="#98b8d8" stroke-width=".7"/><path d="M11 6l3-3 4 3-3 4z" fill="#a8d0f0"/><path d="M2 24V10l8 7 12-7-6 13z" fill="#fbeb8c" stroke="#c4a436" stroke-width=".7"/></svg>
  <svg style="left:8px;top:34px" width="23" height="24" viewBox="0 0 24 25"><path d="M2 9l5-2 5 5 10-3-1 5-6 10-13 1z" fill="#efd45c" stroke="#c4a436" stroke-width=".7"/><path d="M8 9l6-8 7 5-6 9z" fill="#eef4fa" stroke="#98b8d8" stroke-width=".7"/><circle cx="14" cy="7" r="2.600" fill="#e89868"/><path d="M10 11l4-3 4 2-3 4z" fill="#a8d8e8"/><path d="M2 24V10l8 7 12-7-6 13z" fill="#fbeb8c" stroke="#c4a436" stroke-width=".7"/></svg>
  <svg style="left:8px;top:61px" width="23" height="25" viewBox="0 0 24 26"><path d="M2 10l5-2 5 5 10-3-1 5-6 10-13 1z" fill="#efd45c" stroke="#c4a436" stroke-width=".7"/><path d="M14 13V1c4 1 6 4 5 8-1-2-2-3-3-3v8c0 2-5 3-5 1s2-2 3-2z" fill="#3a3a98"/><ellipse cx="12" cy="16" rx="4" ry="2.500" fill="#e8e4f0" stroke="#b8a8c8" stroke-width=".5"/><path d="M2 25V11l8 7 12-7-6 13z" fill="#fbeb8c" stroke="#c4a436" stroke-width=".7"/></svg>
  <!-- computer -->
  <svg style="left:7px;top:91px" width="25" height="24" viewBox="0 0 25 24"><rect x="14" y="2" width="10" height="17" fill="#c9cde8" stroke="#7a82b8" stroke-width=".8"/><rect x="1" y="1" width="16" height="14" rx="1" fill="#d4dcf4" stroke="#6a78b8" stroke-width=".8"/><rect x="3" y="3" width="12" height="10" fill="#52b8f6"/><path d="M3 13L15 3v10z" fill="#3a9cee"/><ellipse cx="10" cy="20" rx="8" ry="3" fill="#e0e4f4" stroke="#8a92c0" stroke-width=".8"/></svg>
  <div class="sep" style="left:28px;top:122px;width:134px"></div>
  <!-- control panel -->
  <svg style="left:7px;top:126px" width="24" height="24" viewBox="0 0 24 24"><rect x="2" y="2" width="15" height="20" fill="#f4f6fc" stroke="#1a3aa0" stroke-width="2.400"/><path d="M6 12l3 4 5-8" stroke="#e0a020" stroke-width="1.800" fill="none"/><path d="M12 18l10-6" stroke="#5a6ab0" stroke-width="2.500" stroke-linecap="round"/><circle cx="21" cy="12" r="1.500" fill="#c04030"/></svg>
  <i class="us" style="left:90px;top:141px"></i>
  <!-- program access -->
  <svg style="left:8px;top:156px" width="23" height="21" viewBox="0 0 23 21"><circle cx="10" cy="11" r="9.500" fill="#4a7ad0" stroke="#2a4a90" stroke-width=".8"/><path d="M10 11V1.500A9.500 9.500 0 0 0 .5 11z" fill="#e04a2a"/><path d="M10 11h9.500A9.500 9.500 0 0 0 10 1.500z" fill="#5ab83a"/><path d="M10 11v9.500A9.500 9.500 0 0 0 19.500 11z" fill="#f0c020"/><path d="M9 12l4 6 9-15" stroke="#2a8a2a" stroke-width="2.400" fill="none"/></svg>
  <div class="sep" style="left:28px;top:186px;width:134px"></div>
  <!-- help -->
  <svg style="left:8px;top:192px" width="23" height="23" viewBox="0 0 23 23"><circle cx="11.500" cy="11.500" r="9.800" fill="#2a52c8" stroke="#f4f7fe" stroke-width="2.400"/><circle cx="11.500" cy="11.500" r="11" fill="none" stroke="#8aa0d8" stroke-width=".6"/><text x="6.500" y="17.500" font-family="Liberation Sans,sans-serif" font-weight="bold" font-size="16" fill="#fff">?</text></svg>
  <i class="us" style="left:102px;top:205px"></i>
  <!-- search -->
  <svg style="left:7px;top:219px" width="24" height="24" viewBox="0 0 24 24"><path d="M3 21l8-8" stroke="#d09030" stroke-width="3.500" stroke-linecap="round"/><circle cx="15.500" cy="8" r="7" fill="#d8f0fc" stroke="#8ab4d8" stroke-width="1.500"/><circle cx="14" cy="6.500" r="3.500" fill="#f4fbff"/></svg>
  <i class="us" style="left:66px;top:233px"></i>
  <!-- run -->
  <svg style="left:8px;top:252px" width="24" height="15" viewBox="0 0 24 15"><path d="M6 1h17l-2 13H3z" fill="#f8f8f0" stroke="#2a4ab0" stroke-width="1.800"/><path d="M6 1h17l-.5 3H5.500z" fill="#2a4ab0"/><rect x="8" y="6" width="10" height="5" fill="#e8e4d0" stroke="#999" stroke-width=".5"/><path d="M0 4h4M0 7h4M0 10h4" stroke="#8a96c0" stroke-width="1"/></svg>
  <i class="us" style="left:66px;top:261px"></i>
 </div>
 <div id="smfoot">
  <div class="fb" style="left:183px;background:linear-gradient(135deg,#f0b040,#d08a1a)"><svg width="20" height="20" viewBox="0 0 20 20" style="left:1px;top:1px"><circle cx="13" cy="7" r="4" fill="none" stroke="#fff" stroke-width="2.200"/><path d="M10 10l-7 7M5 15l2 2M7.500 12.500l2 2" stroke="#fff" stroke-width="2.200"/></svg></div>
  <i class="us w" style="left:241px;top:25px"></i>
  <div class="fb" style="left:264px;background:linear-gradient(135deg,#e86a40,#c8381a)"><svg width="20" height="20" viewBox="0 0 20 20" style="left:1px;top:1px"><circle cx="10" cy="10" r="6" fill="none" stroke="#fff" stroke-width="2.200"/><path d="M10 6.500v6" stroke="#fff" stroke-width="2"/></svg></div>
  <i class="us w" style="left:358px;top:25px"></i>
 </div>
</div>
<div id="tb" class="abs">
 <div id="startbtn"><svg style="left:10px;top:5px" width="19" height="17" viewBox="0 0 20 18"><path d="M2 2.500c2.500-1.300 4.500-1.200 7 .3L7.600 8.200c-2.400-1.400-4.500-1.500-7-.2z" fill="#f0683c"/><path d="M10.300 3.300c2.500 1.300 4.600 1.300 7.200 0l-1.500 5.500c-2.500 1.300-4.600 1.300-7.100-.1z" fill="#8ccf4a"/><path d="M1.200 9.200c2.500-1.300 4.600-1.200 7.100.2l-1.500 5.500c-2.400-1.400-4.500-1.500-7-.2z" fill="#5a9cf0"/><path d="M8.700 10c2.500 1.300 4.600 1.300 7.100 0l-1.500 5.500c-2.500 1.300-4.600 1.300-7.100-.1z" fill="#fbc82f"/></svg></div>
 <!-- quick launch -->
 <svg class="ql" style="left:109px" width="16" height="16" viewBox="0 0 16 16"><path d="M3 1h10c1 0 2 1 2 2v10c0 1-1 2-2 2H3c-1 0-2-1-2-2V3c0-1 1-2 2-2z" fill="#eef3fb" stroke="#5a78b8" stroke-width="1"/><path d="M5 5h6M5 8h6M5 11h4" stroke="#3a5aa8" stroke-width="1.200"/><path d="M10 9l4-5" stroke="#c04030" stroke-width="1.500"/></svg>
 <svg class="ql" style="left:132px" width="16" height="16" viewBox="0 0 16 16"><path d="M8 2.500c3.300 0 6 2.300 6 6H5.700c0 1.800 1 2.600 2.500 2.600 1 0 1.900-.5 2.400-1.500h3.200c-.9 2.700-3 4.200-5.800 4.200-3.300 0-6-2.200-6-5.700S4.700 2.500 8 2.500zm.1 2.300c-1.200 0-2.100.7-2.400 1.700h4.800c-.3-1-1.200-1.700-2.400-1.700z" fill="#4aa4f4" stroke="#2a78d8" stroke-width=".5"/><path d="M.8 13.500C-.5 9.500 7 2 13.500.8c2-.3 2.800.8 1.700 3-.2-1.400-1-1.800-2.200-1.500C8 3.500 2.500 9 2.200 12.300z" fill="#6cbcf8"/></svg>
 <svg class="ql" style="left:155px" width="17" height="16" viewBox="0 0 17 16"><circle cx="6" cy="4" r="2.500" fill="#f0d8a0"/><circle cx="11" cy="3.500" r="2.500" fill="#e8c890"/><path d="M1 14c0-4 2-6 5-6s3 1 5 0 5 2 5 6z" fill="#d8b030"/><path d="M1 13c3-2 6 0 8-1s5-1 7 1v2H1z" fill="#4a9ad8"/></svg>
 <svg class="ql" style="left:178px" width="17" height="17" viewBox="0 0 17 17"><path d="M2 5c2-4 11-4 13 0l-1 2H3z" fill="#3a8a9a" stroke="#1a4a5a" stroke-width=".8"/><rect x="4" y="6" width="9" height="7" rx="2" fill="#f0d8b0" stroke="#1a4a5a" stroke-width=".8"/><path d="M3 13h11v3H3z" fill="#2a6a7a"/><circle cx="6.500" cy="9" r="1" fill="#222"/><circle cx="10.500" cy="9" r="1" fill="#222"/></svg>
 <svg class="ql" style="left:201px;top:8px" width="16" height="15" viewBox="0 0 16 15"><ellipse cx="8" cy="8" rx="7.500" ry="6.500" fill="#5aa8f0" stroke="#2a6ac8" stroke-width=".8"/><ellipse cx="8" cy="5.500" rx="5" ry="2.500" fill="#b8dcfa"/><circle cx="5.500" cy="9" r=".9" fill="#124"/><circle cx="10.500" cy="9" r=".9" fill="#124"/></svg>
 <svg class="ql" style="left:224px" width="15" height="17" viewBox="0 0 15 17"><ellipse cx="7.500" cy="5" rx="4" ry="4.500" fill="#111"/><ellipse cx="7.500" cy="11" rx="6" ry="5.500" fill="#111"/><ellipse cx="7.500" cy="12" rx="3.500" ry="4" fill="#fff"/><path d="M2 9c3 2 8 2 11 0v2c-3 2-8 2-11 0z" fill="#e02a1a"/><path d="M3 16h4v1H2zM8 16h4l1 1H8z" fill="#f0a020"/><ellipse cx="7.500" cy="6.500" rx="1.800" ry=".8" fill="#f0a020"/><circle cx="6" cy="4" r=".8" fill="#fff"/><circle cx="9" cy="4" r=".8" fill="#fff"/></svg>
 <svg class="ql" style="left:247px" width="16" height="16" viewBox="0 0 16 16"><circle cx="8" cy="8" r="7.500" fill="#e8e8e8"/><path d="M8 8V.5A7.500 7.500 0 0 1 14.500 4z" fill="#e84a8a"/><path d="M8 8l6.500-4A7.500 7.500 0 0 1 14 12.500z" fill="#f0c020"/><path d="M8 8l6 4.500A7.500 7.500 0 0 1 6 15.200z" fill="#5ab83a"/><path d="M8 8L6 15.200A7.500 7.500 0 0 1 .6 9z" fill="#3a8ae0"/><path d="M8 8L.6 9A7.500 7.500 0 0 1 8 .5z" fill="#e0603a"/><circle cx="8" cy="8" r="2" fill="#fff"/></svg>
 <svg class="ql" style="left:271px;top:6px" width="16" height="16" viewBox="0 0 16 16"><circle cx="8" cy="8" r="7.500" fill="#f8c838" stroke="#e09018" stroke-width=".8"/><path d="M3 8c2 5 8 5 10 0z" fill="#e03a1a"/><circle cx="5.500" cy="5.500" r=".9" fill="#532"/><circle cx="10.500" cy="5.500" r=".9" fill="#532"/></svg>
 <svg class="ql" style="left:293px" width="17" height="17" viewBox="0 0 17 17"><rect x="1" y="1" width="4" height="4" fill="#8ac0f0"/><rect x="12" y="1" width="4" height="4" fill="#8ac0f0"/><rect x="5" y="3" width="11" height="5" fill="#f0d040" stroke="#4a5a20" stroke-width=".8"/><rect x="5" y="10" width="11" height="5" fill="#f0d040" stroke="#4a5a20" stroke-width=".8"/><rect x="1" y="6" width="3" height="9" fill="#2a4a8a"/></svg>
 <svg class="ql" style="left:317px;top:9px" width="12" height="13" viewBox="0 0 12 13"><path d="M11 1C6 3 2 6 1 9l3 0 2 3 1-4 3-2-4 0z" fill="#3ab0f0"/></svg>
 <!-- task buttons -->
 <div class="tk" style="left:394px;width:144px"><svg style="left:9px;top:3px" width="16" height="16" viewBox="0 0 16 16"><path d="M4 .5h7l4 4v11H4z" fill="#f4f8fd" stroke="#a8b8d8" stroke-width=".8"/><path d="M2.300 8.300h8.700a4.600 4.300 0 1 0-1.400 3.300" fill="none" stroke="#2b78d8" stroke-width="2.200"/><path d="M0 12c2-5 8-9 13-9" stroke="#e8b530" stroke-width=".9" fill="none"/></svg></div>
 <div class="tk on" style="left:540px;width:147px"><svg style="left:0;top:-2px" width="130" height="27" viewBox="0 0 130 27"><defs><filter id="spr" x="-5%" y="-20%" width="110%" height="140%"><feTurbulence type="fractalNoise" baseFrequency=".85" numOctaves="2" seed="7" result="n"/><feDisplacementMap in="SourceGraphic" in2="n" scale="6" xChannelSelector="R" yChannelSelector="G"/></filter></defs><path filter="url(#spr)" d="M5 11L12 7 20 2 35 1 50 3 65 5 80 6 95 7 105 6 115 7 121 12 117 17 108 18 102 21 98 23 85 22 72 20 60 19 45 21 30 21 18 18 10 15z" fill="#050505"/></svg></div>
 <div class="tk" style="left:689px;width:144px"><svg style="left:8px;top:3px" width="16" height="15" viewBox="0 0 16 15"><path d="M1 2h5l2 2h7v10H1z" fill="#f3d869" stroke="#b8962a" stroke-width=".8"/><path d="M1 14l2-8h13l-2 8z" fill="#fbe98a" stroke="#b8962a" stroke-width=".8"/></svg><span style="left:28px">IceSword122cn</span></div>
 <div class="tk" style="left:835px;width:146px"><svg style="left:9px;top:4px" width="16" height="14" viewBox="0 0 16 14"><rect width="16" height="14" fill="#f4f2ec"/><path d="M2 13L12 3" stroke="#b9b6aa" stroke-width="1.200"/><path d="M10 2l4-1-1 4z" fill="#7a7868"/></svg><span style="left:29px">amq2CF769</span></div>
 <div class="tk" style="left:983px;width:146px"><svg style="left:9px;top:3px" width="16" height="16" viewBox="0 0 16 16"><path d="M4 .5h7l4 4v11H4z" fill="#f4f8fd" stroke="#a8b8d8" stroke-width=".8"/><path d="M2.300 8.300h8.700a4.600 4.300 0 1 0-1.400 3.300" fill="none" stroke="#2b78d8" stroke-width="2.200"/><path d="M0 12c2-5 8-9 13-9" stroke="#e8b530" stroke-width=".9" fill="none"/></svg></div>
 <!-- keyboard -->
 <div id="kbd"><svg style="left:2px;top:11px" width="13" height="10" viewBox="0 0 13 10"><rect x=".5" y="2.500" width="12" height="7" fill="#fff" stroke="#222" stroke-width="1"/><path d="M2 4.500h9M2 6h9M3 7.800h7" stroke="#222" stroke-width=".8" stroke-dasharray="1 .6"/><path d="M2 0c1 1 2 1 3 0s2-1 3 0 2 1 3 0" stroke="#222" stroke-width=".7" fill="none"/></svg></div>
 <div id="tray">
  <div class="chev"><svg width="7" height="9" viewBox="0 0 7 9" style="left:3px;top:3px"><path d="M5.500 1L2 4.500 5.500 8" stroke="#fff" stroke-width="2" fill="none"/></svg></div>
  <svg class="ti" style="left:13px" width="17" height="15" viewBox="0 0 17 15"><rect width="17" height="15" fill="#f2f0ea"/><path d="M2 14L13 3" stroke="#c0bdb0" stroke-width="1.200"/><path d="M11 2l4-1-1 4z" fill="#8a6a68"/></svg>
  <svg class="ti" style="left:32px" width="16" height="15" viewBox="0 0 16 15"><ellipse cx="8" cy="8" rx="7.500" ry="7" fill="#f4c820" stroke="#c08a10" stroke-width=".8"/><circle cx="8" cy="6" r="1.200" fill="#321"/><circle cx="12" cy="6" r="1.200" fill="#321"/><path d="M6 10c2 2 5 2 7 0" stroke="#7a4a00" stroke-width="1" fill="none"/></svg>
  <svg class="ti" style="left:51px" width="15" height="15" viewBox="0 0 15 15"><circle cx="7.500" cy="7.500" r="7" fill="#2a8ae8"/><path d="M7.500 4c2.500 0 4 1.500 4 4h-6c0 1.500 1 2 2 2s1.500-.4 2-1h2c-.7 1.800-2 3-4 3-2.500 0-4-1.700-4-4s1.500-4 4-4zm0 1.500c-1 0-1.700.6-2 1.500h4c-.3-.9-1-1.500-2-1.500z" fill="#fff"/></svg>
  <svg class="ti" style="left:69px" width="15" height="16" viewBox="0 0 15 16"><path d="M7.500.5c2 1.500 4 2 6.500 2v6c0 3.500-3 6-6.500 7C4 14.500 1 12 1 8.500v-6c2.500 0 4.500-.5 6.500-2z" fill="#2a5ad0" stroke="#c8d8f8" stroke-width="1"/><path d="M7.500 4v8M3.500 8h8" stroke="#fff" stroke-width="2"/></svg>
  <svg class="ti" style="left:86px" width="15" height="16" viewBox="0 0 15 16"><rect x="6" y="1" width="8" height="7" fill="#b8d0f0" stroke="#6a8ac8" stroke-width=".8"/><rect x="1" y="6" width="8" height="7" fill="#c8dcf8" stroke="#6a8ac8" stroke-width=".8"/><path d="M3 15h5M9 10h4" stroke="#8aa0d0" stroke-width="1.500"/></svg>
  <svg class="ti" style="left:104px" width="16" height="16" viewBox="0 0 16 16"><circle cx="8" cy="8" r="7.500" fill="#f0883a" stroke="#f8d0a8" stroke-width="1"/><path d="M4 9l3 3 5-8" stroke="#fff" stroke-width="2" fill="none"/></svg>
  <svg class="ti" style="left:122px" width="16" height="16" viewBox="0 0 16 16"><circle cx="8" cy="8" r="7.500" fill="#1a5ac0"/><circle cx="8" cy="6" r="2.500" fill="#0a1a4a"/><path d="M3 14c0-3 2-5 5-5s5 2 5 5z" fill="#0a1a4a"/></svg>
  <svg class="ti" style="left:140px" width="16" height="15" viewBox="0 0 16 15"><path d="M1 3l7-2 7 2v10l-7 2-7-2z" fill="#e8c030" stroke="#8a6a10" stroke-width=".8"/><path d="M8 1v14" stroke="#8a6a10" stroke-width=".8"/></svg>
  <svg class="ti" style="left:158px" width="15" height="15" viewBox="0 0 15 15"><circle cx="7.500" cy="7.500" r="7" fill="#e8f0f8" stroke="#123" stroke-width="1.200"/><path d="M.5 7.500h14M7.500 .5v14M2 4h11M2 11h11" stroke="#123" stroke-width="1"/><ellipse cx="7.500" cy="7.500" rx="3.500" ry="7" fill="none" stroke="#123" stroke-width="1"/></svg>
  <svg class="ti" style="left:176px" width="15" height="15" viewBox="0 0 15 15"><circle cx="7.500" cy="7.500" r="7" fill="#4a4a52"/><circle cx="6" cy="6" r="3" fill="#8a8a92"/></svg>
  <svg class="ti" style="left:194px" width="16" height="15" viewBox="0 0 16 15"><path d="M1 9c0-5 3-8 7-8s7 3 7 8c-2-2-5-2-7 0-2-2-5-2-7 0z" fill="#3ab84a" stroke="#1a7a2a" stroke-width=".8"/><path d="M8 9v5" stroke="#321" stroke-width="1.200"/></svg>
  <svg class="ti" style="left:212px" width="14" height="14" viewBox="0 0 14 14"><circle cx="7" cy="7" r="6" fill="none" stroke="#8ac8f8" stroke-width="1.500"/><circle cx="7" cy="7" r="3" fill="#4aa8f0"/></svg>
  <span class="clock">21:38</span>
  <span class="wm">www.supoo.com</span>
 </div>
</div>

</body></html>
